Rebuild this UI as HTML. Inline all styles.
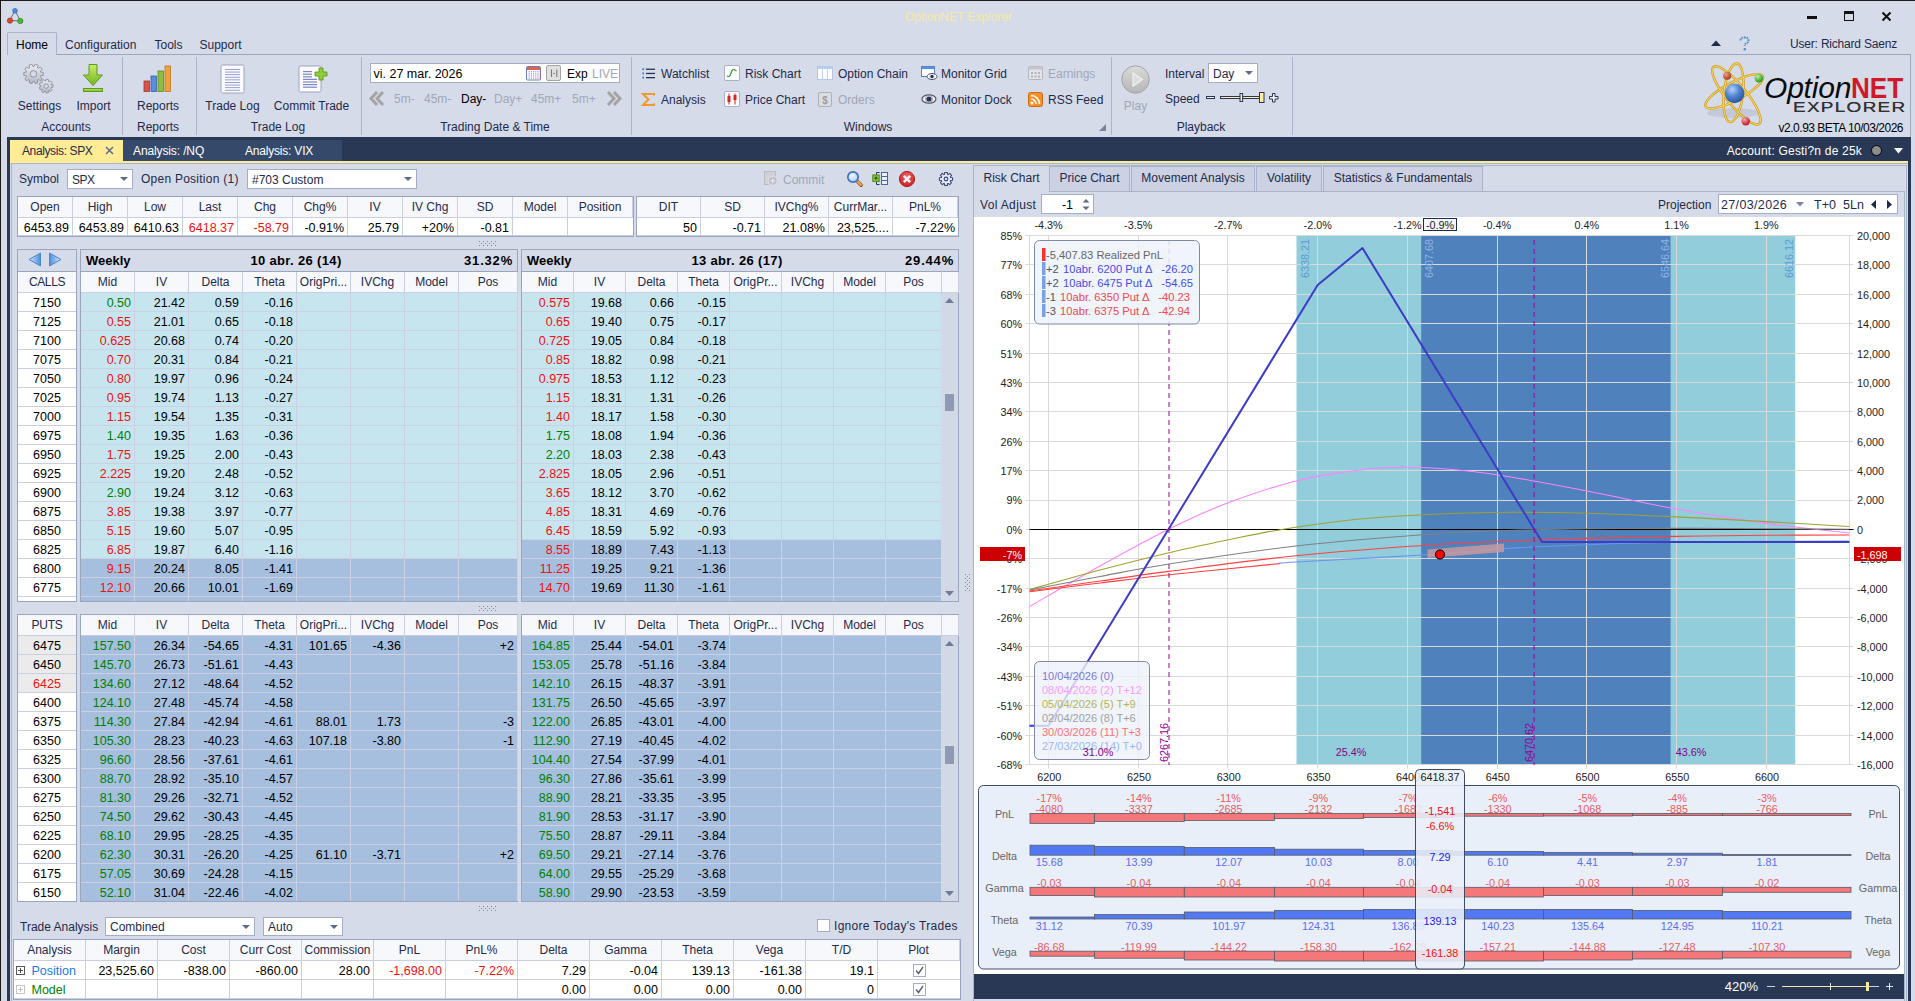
<!DOCTYPE html>
<html><head><meta charset="utf-8"><title>OptionNET Explorer</title><style>
html,body{margin:0;padding:0}
body{width:1915px;height:1001px;overflow:hidden;position:relative;background:#d6dbe9;font-family:"Liberation Sans",sans-serif;font-size:12px;color:#1e2a4a}
div{position:absolute;box-sizing:border-box;white-space:nowrap}
svg{position:absolute;overflow:visible}
.t{height:16px;line-height:16px;font-size:12px;color:#1e2a4a}
.c{text-align:center}
.r{text-align:right}
.n{font-size:12.5px;color:#000}
.g{color:#8f97ab}
.hd{background:#f7f8fc;color:#1e2a4a;text-align:center;border-right:1px solid #c9cfe0;border-bottom:1px solid #c9cfe0;line-height:21px;font-size:12px;overflow:hidden}
.cell{border-right:1px solid #c9cfe0;border-bottom:1px solid #c9cfe0;line-height:20px;font-size:12.5px;color:#000;text-align:right;padding-right:3px;overflow:hidden}
.combo{background:#fff;border:1px solid #a3adc4;line-height:20px;font-size:12px;color:#1e2a4a;padding-left:4px}
.combo:after{content:"";position:absolute;right:4px;top:7px;border:4px solid transparent;border-top:4px solid #5d6b88;border-bottom:none}
.cc{text-align:center;padding:0}
.red{color:#f01010}.grn{color:#008000}
</style></head><body>
<div style="left:0px;top:0px;width:1915px;height:1px;background:#1a1a1a"></div>
<div style="left:0px;top:0px;width:1px;height:1001px;background:#1a1a1a"></div>
<div class="t c" style="left:808.5px;width:300px;top:9px;color:#f7e9a6;font-size:12px">OptionNET Explorer</div>
<svg style="left:6px;top:7px" width="18" height="18" viewBox="0 0 18 18">
<path d="M9 3.5 L4 13 M9 3.5 L14.5 14 M4 13.5 L14 14" stroke="#6a6f7a" stroke-width="1" fill="none"/>
<circle cx="9" cy="3.8" r="2.4" fill="#4a8ae0" stroke="#2a5aa8" stroke-width=".6"/>
<circle cx="4" cy="13.6" r="2.7" fill="#e0452a" stroke="#9a2a18" stroke-width=".6"/>
<circle cx="14.3" cy="14" r="2.7" fill="#48b838" stroke="#2a7a20" stroke-width=".6"/></svg>
<div style="left:1807px;top:16px;width:10px;height:3px;background:#111"></div>
<div style="left:1844px;top:11px;width:10px;height:10px;border:1.5px solid #111;border-top:3px solid #111"></div>
<svg style="left:1881px;top:11px" width="11" height="11" viewBox="0 0 11 11"><path d="M1.5 1.5 L9.5 9.5 M9.5 1.5 L1.5 9.5" stroke="#111" stroke-width="2"/></svg>
<div style="left:7px;top:54px;width:1904px;height:82px;border-top:1px solid #9ca7bc;"></div>
<div style="left:7px;top:32px;width:50px;height:23px;background:#d6dbe9;border:1px solid #a9b3c9;border-bottom:none;border-radius:2px 2px 0 0"></div>
<div style="left:8px;top:54px;width:48px;height:1px;background:#d6dbe9"></div>
<div class="t" style="left:16px;top:36.7px;color:#000">Home</div>
<div class="t" style="left:65px;top:36.7px;">Configuration</div>
<div class="t" style="left:154.5px;top:36.7px;">Tools</div>
<div class="t" style="left:199.5px;top:36.7px;">Support</div>
<svg style="left:1711px;top:40px" width="10" height="6"><path d="M0 6 L5 0.5 L10 6Z" fill="#1e2a4a"/></svg>
<svg style="left:1738px;top:36px" width="13" height="16" viewBox="0 0 13 16"><path d="M2.5 4.5 Q2.5 1.5 6.5 1.5 Q10.5 1.5 10.5 4.5 Q10.5 6.5 8 7.5 Q6.8 8.2 6.8 10" stroke="#4a8fd8" stroke-width="2" fill="none" stroke-dasharray="1.6 .9"/><circle cx="6.8" cy="13.3" r="1.3" fill="#4a8fd8"/></svg>
<div class="t r" style="left:1597px;width:300px;top:35.8px;letter-spacing:-.2px">User: Richard Saenz</div>
<div style="left:1910px;top:55px;width:1px;height:82px;background:#9ca7bc"></div>
<div style="left:122px;top:57px;width:1px;height:78px;background:#a9b3c9"></div>
<div style="left:196px;top:57px;width:1px;height:78px;background:#a9b3c9"></div>
<div style="left:361px;top:57px;width:1px;height:78px;background:#a9b3c9"></div>
<div style="left:631px;top:57px;width:1px;height:78px;background:#a9b3c9"></div>
<div style="left:1111px;top:57px;width:1px;height:78px;background:#a9b3c9"></div>
<div style="left:1292px;top:57px;width:1px;height:78px;background:#a9b3c9"></div>
<div class="t c" style="left:-84px;width:300px;top:118.5px;">Accounts</div>
<div class="t c" style="left:8px;width:300px;top:118.5px;">Reports</div>
<div class="t c" style="left:128px;width:300px;top:118.5px;">Trade Log</div>
<div class="t c" style="left:345px;width:300px;top:118.5px;">Trading Date &amp; Time</div>
<div class="t c" style="left:718px;width:300px;top:118.5px;">Windows</div>
<div class="t c" style="left:1051px;width:300px;top:118.5px;">Playback</div>
<div class="t c" style="left:-110.5px;width:300px;top:97.5px;">Settings</div>
<div class="t c" style="left:-56.5px;width:300px;top:97.5px;">Import</div>
<div class="t c" style="left:8px;width:300px;top:97.5px;">Reports</div>
<div class="t c" style="left:82.5px;width:300px;top:97.5px;">Trade Log</div>
<div class="t c" style="left:161.5px;width:300px;top:97.5px;">Commit Trade</div>
<svg style="left:22px;top:62px" width="34" height="34"><defs><linearGradient id="ggear" x1="0" y1="0" x2="0" y2="1"><stop offset="0" stop-color="#eceef2"/><stop offset="1" stop-color="#b4b8c2"/></linearGradient></defs>
<path d="M18.68 10.10 L21.19 10.43 L21.19 13.37 L18.68 13.70 L18.36 14.67 L20.20 16.40 L18.47 18.79 L16.25 17.57 L15.43 18.17 L15.89 20.66 L13.09 21.57 L12.01 19.28 L10.99 19.28 L9.91 21.57 L7.11 20.66 L7.57 18.17 L6.75 17.57 L4.53 18.79 L2.80 16.40 L4.64 14.67 L4.32 13.70 L1.81 13.37 L1.81 10.43 L4.32 10.10 L4.64 9.13 L2.80 7.40 L4.53 5.01 L6.75 6.23 L7.57 5.63 L7.11 3.14 L9.91 2.23 L10.99 4.52 L12.01 4.52 L13.09 2.23 L15.89 3.14 L15.43 5.63 L16.25 6.23 L18.47 5.01 L20.20 7.40 L18.36 9.13Z" fill="url(#ggear)" stroke="#8a8e9a" stroke-width=".9" stroke-linejoin="round"/><circle cx="11.5" cy="11.9" r="3.3" fill="#d6dbe9" stroke="#8a8e9a" stroke-width=".9"/>
<path d="M29.01 22.73 L31.00 22.93 L31.00 25.27 L29.01 25.47 L28.74 26.21 L30.14 27.64 L28.64 29.43 L26.98 28.31 L26.30 28.70 L26.45 30.69 L24.15 31.10 L23.60 29.18 L22.83 29.04 L21.66 30.66 L19.64 29.49 L20.46 27.67 L19.95 27.07 L18.01 27.56 L17.21 25.36 L19.02 24.49 L19.02 23.71 L17.21 22.84 L18.01 20.64 L19.95 21.13 L20.46 20.53 L19.64 18.71 L21.66 17.54 L22.83 19.16 L23.60 19.02 L24.15 17.10 L26.45 17.51 L26.30 19.50 L26.98 19.89 L28.64 18.77 L30.14 20.56 L28.74 21.99Z" fill="url(#ggear)" stroke="#8a8e9a" stroke-width=".9" stroke-linejoin="round"/><circle cx="24.1" cy="24.1" r="2.3" fill="#d6dbe9" stroke="#8a8e9a" stroke-width=".9"/></svg>
<svg style="left:81px;top:63px" width="24" height="30" viewBox="0 0 24 30">
<defs><linearGradient id="gimp" x1="0" y1="0" x2="0" y2="1"><stop offset="0" stop-color="#c6ee6a"/><stop offset="1" stop-color="#6fb51c"/></linearGradient></defs>
<path d="M8 1.5 h8 v10.5 h5.5 L12 22.5 L2.5 12 h5.5z" fill="url(#gimp)" stroke="#5e9a1a" stroke-width="1"/>
<rect x="2.5" y="25.5" width="19" height="3" fill="url(#gimp)" stroke="#5e9a1a" stroke-width="1"/></svg>
<svg style="left:143px;top:64px" width="29" height="29" viewBox="0 0 29 29">
<rect x="1" y="17" width="5.5" height="10.5" fill="#d9534a" stroke="#a83228" stroke-width=".8"/>
<rect x="8" y="12" width="5.5" height="15.5" fill="#5b8ed6" stroke="#3864a8" stroke-width=".8"/>
<rect x="15" y="7" width="5.5" height="20.5" fill="#8bbd3e" stroke="#5f8c22" stroke-width=".8"/>
<rect x="22" y="2" width="5.5" height="25.5" fill="#f0a13c" stroke="#c0741a" stroke-width=".8"/></svg>
<svg style="left:220px;top:64px" width="25" height="30" viewBox="0 0 25 30"><rect x="1" y="1" width="23" height="28" rx="1.5" fill="#fbfbfd" stroke="#9aa3c2" stroke-width="1"/><rect x="5" y="5.0" width="15" height=".9" fill="#8a96cc"/><rect x="5" y="7.6" width="15" height=".9" fill="#8a96cc"/><rect x="5" y="10.2" width="15" height=".9" fill="#8a96cc"/><rect x="5" y="12.8" width="15" height=".9" fill="#8a96cc"/><rect x="5" y="15.4" width="15" height=".9" fill="#8a96cc"/><rect x="5" y="18.0" width="15" height=".9" fill="#8a96cc"/><rect x="5" y="20.6" width="15" height=".9" fill="#8a96cc"/><rect x="5" y="23.2" width="15" height=".9" fill="#8a96cc"/><rect x="5" y="25.8" width="15" height=".9" fill="#8a96cc"/></svg>
<svg style="left:298px;top:64px" width="31" height="30" viewBox="0 0 31 30"><rect x="1" y="2" width="22" height="26" rx="1.5" fill="#fbfbfd" stroke="#9aa3c2" stroke-width="1"/><rect x="5" y="7.0" width="9" height="1.2" fill="#7a86c8"/><rect x="5" y="9.6" width="9" height="1.2" fill="#7a86c8"/><rect x="5" y="12.2" width="9" height="1.2" fill="#7a86c8"/><rect x="5" y="14.8" width="14" height="1.2" fill="#7a86c8"/><rect x="5" y="17.4" width="14" height="1.2" fill="#7a86c8"/><rect x="5" y="20.0" width="14" height="1.2" fill="#7a86c8"/><rect x="5" y="22.6" width="14" height="1.2" fill="#7a86c8"/>
<path d="M19 7 h4 v-4 h4 v4 h4 v4 h-4 v4 h-4 v-4 h-4z" transform="translate(-2,1)" fill="#8fcb3a" stroke="#5f9a1c" stroke-width=".9"/></svg>
<div style="left:370px;top:63px;width:250px;height:20px;background:#fff;border:1px solid #a3adc4"></div>
<div class="t" style="left:373.5px;top:65.7px;color:#000;font-size:12.5px">vi. 27 mar. 2026</div>
<svg style="left:526px;top:66px" width="16" height="15" viewBox="0 0 16 15"><rect x=".5" y=".5" width="14" height="13.5" rx="1" fill="#fff" stroke="#6a7cc0"/><rect x="1" y="1" width="13" height="3" fill="#e2604e"/><rect x="2.6" y="5.2" width="1.1" height="1.1" fill="#7a8ad0"/><rect x="4.8" y="5.2" width="1.1" height="1.1" fill="#7a8ad0"/><rect x="7.0" y="5.2" width="1.1" height="1.1" fill="#7a8ad0"/><rect x="9.2" y="5.2" width="1.1" height="1.1" fill="#7a8ad0"/><rect x="11.4" y="5.2" width="1.1" height="1.1" fill="#7a8ad0"/><rect x="13.6" y="5.2" width="1.1" height="1.1" fill="#e05a4a"/><rect x="2.6" y="7.3" width="1.1" height="1.1" fill="#7a8ad0"/><rect x="4.8" y="7.3" width="1.1" height="1.1" fill="#7a8ad0"/><rect x="7.0" y="7.3" width="1.1" height="1.1" fill="#7a8ad0"/><rect x="9.2" y="7.3" width="1.1" height="1.1" fill="#7a8ad0"/><rect x="11.4" y="7.3" width="1.1" height="1.1" fill="#7a8ad0"/><rect x="13.6" y="7.3" width="1.1" height="1.1" fill="#e05a4a"/><rect x="2.6" y="9.4" width="1.1" height="1.1" fill="#7a8ad0"/><rect x="4.8" y="9.4" width="1.1" height="1.1" fill="#7a8ad0"/><rect x="7.0" y="9.4" width="1.1" height="1.1" fill="#7a8ad0"/><rect x="9.2" y="9.4" width="1.1" height="1.1" fill="#7a8ad0"/><rect x="11.4" y="9.4" width="1.1" height="1.1" fill="#7a8ad0"/><rect x="13.6" y="9.4" width="1.1" height="1.1" fill="#e05a4a"/><rect x="2.6" y="11.5" width="1.1" height="1.1" fill="#7a8ad0"/><rect x="4.8" y="11.5" width="1.1" height="1.1" fill="#7a8ad0"/><rect x="7.0" y="11.5" width="1.1" height="1.1" fill="#7a8ad0"/><rect x="9.2" y="11.5" width="1.1" height="1.1" fill="#e05a4a"/><rect x="11.4" y="11.5" width="1.1" height="1.1" fill="#e05a4a"/><rect x="13.6" y="11.5" width="1.1" height="1.1" fill="#e05a4a"/></svg>
<div style="left:546px;top:65px;width:15px;height:16px;background:#e0e0e0;border:1px solid #a4a4a4;border-radius:2px"></div>
<svg style="left:546px;top:65px" width="15" height="16"><path d="M5.5 4.5 v7.5 M10.8 4.5 v7.5 M7.4 8.5 h1.6" stroke="#7a7a7a" stroke-width="1.1" fill="none"/></svg>
<div class="t" style="left:567px;top:65.7px;color:#000">Exp</div>
<div class="t" style="left:592px;top:65.7px;color:#a0a7b8">LIVE</div>
<div class="t" style="left:394px;top:90.5px;color:#a0a7b8">5m-</div>
<div class="t" style="left:424px;top:90.5px;color:#a0a7b8">45m-</div>
<div class="t" style="left:461px;top:90.5px;color:#000">Day-</div>
<div class="t" style="left:494px;top:90.5px;color:#a0a7b8">Day+</div>
<div class="t" style="left:531px;top:90.5px;color:#a0a7b8">45m+</div>
<div class="t" style="left:572px;top:90.5px;color:#a0a7b8">5m+</div>
<svg style="left:369px;top:91px" width="16" height="15"><path d="M8 1 L2 7.5 L8 14 M14 1 L8 7.5 L14 14" stroke="#a4a4a4" stroke-width="3" fill="none"/></svg>
<svg style="left:606px;top:91px" width="16" height="15"><path d="M2 1 L8 7.5 L2 14 M8 1 L14 7.5 L8 14" stroke="#a4a4a4" stroke-width="3" fill="none"/></svg>
<div class="t" style="left:661px;top:65.5px;">Watchlist</div>
<div class="t" style="left:661px;top:91.5px;">Analysis</div>
<div class="t" style="left:745px;top:65.5px;">Risk Chart</div>
<div class="t" style="left:745px;top:91.5px;">Price Chart</div>
<div class="t" style="left:838px;top:65.5px;">Option Chain</div>
<div class="t" style="left:838px;top:91.5px;color:#a0a7b8">Orders</div>
<div class="t" style="left:941px;top:65.5px;">Monitor Grid</div>
<div class="t" style="left:941px;top:91.5px;">Monitor Dock</div>
<div class="t" style="left:1048px;top:65.5px;color:#a0a7b8">Earnings</div>
<div class="t" style="left:1048px;top:91.5px;">RSS Feed</div>
<svg style="left:641px;top:66px" width="15" height="15"><g fill="#2a3350"><rect x="5" y="2.6" width="9" height="1.3"/><rect x="5" y="6.8" width="9" height="1.3"/><rect x="5" y="11" width="9" height="1.3"/></g><g fill="#4a86d8"><rect x="1.3" y="2.2" width="1.8" height="2"/><rect x="1.3" y="6.4" width="1.8" height="2"/><rect x="1.3" y="10.6" width="1.8" height="2"/></g></svg>
<svg style="left:641px;top:92px" width="15" height="15"><path d="M13 3.5 V2 H2 L7.5 7.5 L2 13 H13 V11.5" stroke="#f09a28" stroke-width="2" fill="none"/></svg>
<svg style="left:724px;top:65px" width="16" height="16"><rect x=".5" y=".5" width="15" height="15" rx="1.5" fill="#fbfbfd" stroke="#a9b1c8"/><path d="M3 11 Q5.5 13 7 8 Q8.5 3 11 5 L12.5 6" stroke="#4a9a3a" stroke-width="1.3" fill="none"/></svg>
<svg style="left:724px;top:91px" width="16" height="16"><rect x=".5" y=".5" width="15" height="15" rx="1.5" fill="#fbfbfd" stroke="#a9b1c8"/><path d="M5 2.5 v11 M11 2.5 v11" stroke="#c02020" stroke-width="1"/><rect x="3.5" y="5" width="3" height="6" fill="#d02828"/><rect x="9.5" y="4" width="3" height="5" fill="#d02828"/></svg>
<svg style="left:817px;top:66px" width="16" height="14"><rect x=".5" y=".5" width="15" height="13" fill="#fdfdff" stroke="#b4c6e6"/><rect x=".5" y=".5" width="15" height="2.6" fill="#b6cdf0"/><path d="M5.5 3.5 v10 M10.5 3.5 v10" stroke="#c0d0ea"/></svg>
<svg style="left:818px;top:92px" width="14" height="15"><rect x=".5" y=".5" width="13" height="14" rx="1.5" fill="#dcdde2" stroke="#aeb0b8"/><text x="7" y="11.5" font-size="10" text-anchor="middle" fill="#9a9ca6" font-family="Liberation Sans" font-weight="bold">$</text></svg>
<svg style="left:921px;top:66px" width="17" height="15"><rect x=".5" y=".5" width="13" height="10" fill="#fff" stroke="#5b7fc0"/><rect x=".5" y=".5" width="13" height="2.6" fill="#5b8fdc"/><ellipse cx="11" cy="10.5" rx="5" ry="3" fill="#f2f2f6" stroke="#50566a"/><circle cx="11" cy="10.5" r="1.7" fill="#2a3350"/></svg>
<svg style="left:921px;top:93px" width="17" height="12"><ellipse cx="8" cy="6" rx="7" ry="4.2" fill="#f2f2f6" stroke="#50566a" stroke-width="1.2"/><circle cx="8" cy="6" r="2.6" fill="#2a3350"/><circle cx="8" cy="6" r="3.6" fill="none" stroke="#8a90a8" stroke-width=".8"/></svg>
<svg style="left:1028px;top:66px" width="15" height="14"><rect x=".5" y=".5" width="14" height="13" rx="1" fill="#e4e5ea" stroke="#b4b6be"/><rect x=".5" y=".5" width="14" height="3" fill="#c4c6ce"/><g fill="#b4b6be"><rect x="3" y="6" width="2" height="2"/><rect x="6.5" y="6" width="2" height="2"/><rect x="10" y="6" width="2" height="2"/><rect x="3" y="9.5" width="2" height="2"/><rect x="6.5" y="9.5" width="2" height="2"/><rect x="10" y="9.5" width="2" height="2"/></g></svg>
<svg style="left:1028px;top:92px" width="15" height="15"><rect x=".5" y=".5" width="14" height="14" rx="2" fill="#f5902a" stroke="#d06a10"/><circle cx="4" cy="11" r="1.5" fill="#fff"/><path d="M3 7 A5 5 0 0 1 8 12 M3 3.5 A8.5 8.5 0 0 1 11.5 12" stroke="#fff" stroke-width="1.6" fill="none"/></svg>
<svg style="left:1099px;top:124px" width="7" height="7"><path d="M7 0 V7 H0Z" fill="#7a849e"/></svg>
<svg style="left:1121px;top:65px" width="29" height="29"><defs><linearGradient id="gpl" x1="0" y1="0" x2="0" y2="1"><stop offset="0" stop-color="#dadada"/><stop offset="1" stop-color="#b6b6b6"/></linearGradient></defs><circle cx="14.5" cy="14.5" r="13.7" fill="url(#gpl)" stroke="#a4a4a4"/><path d="M12 8 L21.5 14.5 L12 21Z" fill="#dedede" stroke="#f0f0f0" stroke-width="1.2"/></svg>
<div class="t c" style="left:985.5px;width:300px;top:97.5px;color:#a0a7b8">Play</div>
<div class="t" style="left:1165px;top:65.5px;">Interval</div>
<div class="t" style="left:1165px;top:90.5px;">Speed</div>
<div class="combo" style="left:1208px;top:63px;width:50px;height:20px;">Day</div>
<svg style="left:1204px;top:90px" width="76" height="15"><g fill="#fbf0a6" stroke="#2a3358" stroke-width="1">
<rect x="2.5" y="6.5" width="8" height="2" fill="#f4f4f8"/>
<rect x="16.5" y="6.5" width="40" height="2"/>
<rect x="36" y="3.5" width="2.6" height="8"/>
<rect x="55.5" y="2.5" width="4.5" height="10"/>
<path d="M68.5 3.5 h2.5 v3 h3 v2.5 h-3 v3 h-2.5 v-3 h-3 v-2.5 h3z" fill="#f4f4f8"/></g></svg>
<svg style="left:1703.5px;top:61px" width="70" height="72" viewBox="0 0 70 72">
<defs><radialGradient id="gb" cx=".38" cy=".3" r=".75"><stop offset="0" stop-color="#b4d2f8"/><stop offset=".5" stop-color="#4f82d0"/><stop offset="1" stop-color="#2a4f98"/></radialGradient>
<radialGradient id="gr" cx=".35" cy=".3" r=".7"><stop offset="0" stop-color="#f8a8a8"/><stop offset="1" stop-color="#c01820"/></radialGradient>
<radialGradient id="gg" cx=".35" cy=".3" r=".7"><stop offset="0" stop-color="#b8f0a0"/><stop offset="1" stop-color="#2a9a1c"/></radialGradient>
<radialGradient id="go" cx=".35" cy=".3" r=".7"><stop offset="0" stop-color="#f0a888"/><stop offset="1" stop-color="#a83810"/></radialGradient></defs>
<ellipse cx="29" cy="52" rx="26" ry="5" fill="#9aa0b8" opacity=".3"/>
<g fill="none" stroke="#cf9a14" stroke-width="2.4"><ellipse cx="29.5" cy="31.8" rx="29.5" ry="9.5" transform="rotate(96.7 29.5 31.8)"/><ellipse cx="32.4" cy="34.4" rx="36.5" ry="10" transform="rotate(51 32.4 34.4)"/><ellipse cx="30.2" cy="30.3" rx="32.4" ry="9" transform="rotate(-28 30.2 30.3)"/></g>
<g fill="none" stroke="#f4d866" stroke-width="1"><ellipse cx="29.5" cy="31.8" rx="29.5" ry="9.5" transform="rotate(96.7 29.5 31.8)"/><ellipse cx="32.4" cy="34.4" rx="36.5" ry="10" transform="rotate(51 32.4 34.4)"/><ellipse cx="30.2" cy="30.3" rx="32.4" ry="9" transform="rotate(-28 30.2 30.3)"/></g>
<circle cx="30.6" cy="32.4" r="9.8" fill="url(#gb)"/>
<circle cx="23.1" cy="14.8" r="4" fill="url(#go)"/>
<circle cx="54.9" cy="17.1" r="4.3" fill="url(#gg)"/>
<circle cx="41.7" cy="60.2" r="4.2" fill="url(#gr)"/></svg>
<div style="left:1764px;top:70.7px;width:100px;height:34px;font-size:30px;line-height:34px;font-style:italic;color:#0a0a0a;letter-spacing:-.2px">Option</div>
<div style="left:1851.3px;top:70.7px;width:70px;height:34px;font-size:30px;line-height:34px;font-weight:bold;color:#d01828;transform:scaleX(.87);transform-origin:0 0">NET</div>
<div style="left:1792.5px;top:99px;width:90px;height:17px;font-size:14.5px;line-height:17px;color:#333;letter-spacing:1px;text-shadow:0 0 .5px #333;transform:scaleX(1.305);transform-origin:0 0">EXPLORER</div>
<div class="t r" style="left:1603px;width:300px;top:119.5px;color:#000;letter-spacing:-.5px">v2.0.93 BETA 10/03/2026</div>
<div style="left:7px;top:137px;width:1904px;height:26px;background:#293955"></div>
<div style="left:7px;top:163px;width:3px;height:838px;background:#293955"></div>
<div style="left:1908px;top:163px;width:3px;height:838px;background:#293955"></div>
<div style="left:10px;top:161px;width:1898px;height:2px;background:#ffec94"></div>
<div style="left:10px;top:140px;width:113px;height:23px;background:#ffec94"></div>
<div style="left:123px;top:140px;width:219px;height:21px;background:#35496a"></div>
<div class="t" style="left:22px;top:142.5px;color:#1e2a4a;letter-spacing:-.38px">Analysis: SPX</div>
<svg style="left:105px;top:146px" width="9" height="9"><path d="M1 1 L8 8 M8 1 L1 8" stroke="#5d6b88" stroke-width="1.5"/></svg>
<div class="t" style="left:133px;top:142.5px;color:#fff;letter-spacing:-.12px">Analysis: /NQ</div>
<div class="t" style="left:245px;top:142.5px;color:#fff;letter-spacing:-.2px">Analysis: VIX</div>
<div class="t r" style="left:1562px;width:300px;top:143px;color:#fff;letter-spacing:.2px">Account: Gesti?n de 25k</div>
<div style="left:1871px;top:145px;width:11px;height:11px;background:#8c8c8c;border:1px solid #000;border-radius:6px"></div>
<svg style="left:1894px;top:148px" width="9" height="6"><path d="M0 0 H9 L4.5 5.5Z" fill="#fff"/></svg>
<div style="left:11px;top:163px;width:1897px;height:838px;border:1px solid #a9b3c9;border-bottom:none;border-right:none"></div>
<div class="t" style="left:19px;top:171px;">Symbol</div>
<div class="combo" style="left:67px;top:169px;width:66px;height:20px;letter-spacing:-.5px">SPX</div>
<div class="t" style="left:141px;top:171px;letter-spacing:.25px">Open Position (1)</div>
<div class="combo" style="left:247px;top:169px;width:170px;height:20px;">#703 Custom</div>
<div class="t" style="left:783px;top:172px;color:#a0a7b8">Commit</div>
<svg style="left:763px;top:170px" width="18" height="18"><rect x="1.5" y="1.5" width="11" height="13" fill="#cfd1d8" stroke="#babcc4"/><circle cx="9.6" cy="10.8" r="4.6" fill="#bfc1c9" stroke="#dcdee5" stroke-width="1.2"/><path d="M7.2 10.8 h4.8 M9.6 8.4 v4.8" stroke="#e6e8ee" stroke-width="1.2"/></svg>
<svg style="left:846px;top:170px" width="18" height="18"><defs><radialGradient id="glens" cx=".4" cy=".35" r=".7"><stop offset="0" stop-color="#f0f8ff"/><stop offset="1" stop-color="#a8ccf4"/></radialGradient></defs><path d="M10.6 10.6 L15.2 15.2" stroke="#8a5220" stroke-width="3.4" stroke-linecap="round"/><path d="M10.8 10.8 L15 15" stroke="#eda850" stroke-width="2" stroke-linecap="round"/><circle cx="7" cy="7" r="5.2" fill="url(#glens)" stroke="#3f6fc0" stroke-width="1.7"/></svg>
<svg style="left:872px;top:171px" width="17" height="15"><rect x="9.5" y="1.5" width="6" height="12" fill="#e8f0fc" stroke="#4a64a8"/><path d="M9.5 5.5 h6 M9.5 9.5 h6" stroke="#4a64a8"/><path d="M7.5 1.5 h-3 v12 h3" fill="none" stroke="#2a3660"/><rect x=".8" y="4" width="6.4" height="6.4" fill="#8cc63f" stroke="#4c8a18"/><path d="M2.4 7.2 h3.2 M4 5.6 v3.2" stroke="#2a5a10" stroke-width="1.2"/></svg>
<svg style="left:898px;top:170px" width="18" height="18"><defs><radialGradient id="gx" cx=".5" cy=".3" r=".8"><stop offset="0" stop-color="#f06060"/><stop offset="1" stop-color="#c81818"/></radialGradient></defs><circle cx="9" cy="9" r="7.6" fill="url(#gx)" stroke="#a82020" stroke-width="1"/><path d="M5.8 5.8 L12.2 12.2 M12.2 5.8 L5.8 12.2" stroke="#f4f4f8" stroke-width="2.6"/></svg>
<svg style="left:938px;top:171px" width="16" height="16"><path d="M12.66 6.47 L14.57 6.70 L14.57 9.30 L12.66 9.53 L12.37 10.21 L13.56 11.73 L11.73 13.56 L10.21 12.37 L9.53 12.66 L9.30 14.57 L6.70 14.57 L6.47 12.66 L5.79 12.37 L4.27 13.56 L2.44 11.73 L3.63 10.21 L3.34 9.53 L1.43 9.30 L1.43 6.70 L3.34 6.47 L3.63 5.79 L2.44 4.27 L4.27 2.44 L5.79 3.63 L6.47 3.34 L6.70 1.43 L9.30 1.43 L9.53 3.34 L10.21 3.63 L11.73 2.44 L13.56 4.27 L12.37 5.79Z" fill="#e6eaf4" stroke="#3a4874" stroke-width="1.1" stroke-linejoin="round"/><circle cx="8.0" cy="8.0" r="1.9" fill="#d6dbe9" stroke="#3a4874" stroke-width="1.1"/></svg>
<div style="left:17px;top:196px;width:617px;height:41px;border:1px solid #9aa6bd;background:#fff"></div>
<div class="hd" style="left:18px;top:197px;width:55px;height:21px;line-height:21px;">Open</div>
<div class="hd" style="left:73px;top:197px;width:55px;height:21px;line-height:21px;">High</div>
<div class="hd" style="left:128px;top:197px;width:55px;height:21px;line-height:21px;">Low</div>
<div class="hd" style="left:183px;top:197px;width:55px;height:21px;line-height:21px;">Last</div>
<div class="hd" style="left:238px;top:197px;width:55px;height:21px;line-height:21px;">Chg</div>
<div class="hd" style="left:293px;top:197px;width:55px;height:21px;line-height:21px;">Chg%</div>
<div class="hd" style="left:348px;top:197px;width:55px;height:21px;line-height:21px;">IV</div>
<div class="hd" style="left:403px;top:197px;width:55px;height:21px;line-height:21px;">IV Chg</div>
<div class="hd" style="left:458px;top:197px;width:55px;height:21px;line-height:21px;">SD</div>
<div class="hd" style="left:513px;top:197px;width:55px;height:21px;line-height:21px;">Model</div>
<div class="hd" style="left:568px;top:197px;width:65px;height:21px;line-height:21px;">Position</div>
<div class="cell " style="left:18px;top:218px;width:55px;height:18px;line-height:20px;">6453.89</div>
<div class="cell " style="left:73px;top:218px;width:55px;height:18px;line-height:20px;">6453.89</div>
<div class="cell " style="left:128px;top:218px;width:55px;height:18px;line-height:20px;">6410.63</div>
<div class="cell red" style="left:183px;top:218px;width:55px;height:18px;line-height:20px;">6418.37</div>
<div class="cell red" style="left:238px;top:218px;width:55px;height:18px;line-height:20px;">-58.79</div>
<div class="cell " style="left:293px;top:218px;width:55px;height:18px;line-height:20px;">-0.91%</div>
<div class="cell " style="left:348px;top:218px;width:55px;height:18px;line-height:20px;">25.79</div>
<div class="cell " style="left:403px;top:218px;width:55px;height:18px;line-height:20px;">+20%</div>
<div class="cell " style="left:458px;top:218px;width:55px;height:18px;line-height:20px;">-0.81</div>
<div class="cell " style="left:513px;top:218px;width:55px;height:18px;line-height:20px;"></div>
<div class="cell " style="left:568px;top:218px;width:65px;height:18px;border-right:none;line-height:20px;"></div>
<div style="left:636px;top:196px;width:323px;height:41px;border:1px solid #9aa6bd;background:#fff"></div>
<div class="hd" style="left:637px;top:197px;width:64px;height:21px;line-height:21px;">DIT</div>
<div class="hd" style="left:701px;top:197px;width:64px;height:21px;line-height:21px;">SD</div>
<div class="hd" style="left:765px;top:197px;width:64px;height:21px;line-height:21px;">IVChg%</div>
<div class="hd" style="left:829px;top:197px;width:64px;height:21px;line-height:21px;">CurrMar...</div>
<div class="hd" style="left:893px;top:197px;width:65px;height:21px;line-height:21px;">PnL%</div>
<div class="cell " style="left:637px;top:218px;width:64px;height:18px;line-height:20px;">50</div>
<div class="cell " style="left:701px;top:218px;width:64px;height:18px;line-height:20px;">-0.71</div>
<div class="cell " style="left:765px;top:218px;width:64px;height:18px;line-height:20px;">21.08%</div>
<div class="cell " style="left:829px;top:218px;width:64px;height:18px;line-height:20px;">23,525....</div>
<div class="cell " style="left:893px;top:218px;width:65px;height:18px;border-right:none;line-height:20px;">-7.22%</div>
<div style="left:479px;top:241px;width:17px;height:5px;background-image:radial-gradient(circle at 0.5px 0.5px,#7c88a4 0.6px,transparent 0.9px),radial-gradient(circle at 0.5px 0.5px,#7c88a4 0.6px,transparent 0.9px);background-size:4px 4px,4px 4px;background-position:0 0,2px 2px"></div>
<div style="left:479px;top:606px;width:17px;height:5px;background-image:radial-gradient(circle at 0.5px 0.5px,#7c88a4 0.6px,transparent 0.9px),radial-gradient(circle at 0.5px 0.5px,#7c88a4 0.6px,transparent 0.9px);background-size:4px 4px,4px 4px;background-position:0 0,2px 2px"></div>
<div style="left:479px;top:906px;width:17px;height:5px;background-image:radial-gradient(circle at 0.5px 0.5px,#7c88a4 0.6px,transparent 0.9px),radial-gradient(circle at 0.5px 0.5px,#7c88a4 0.6px,transparent 0.9px);background-size:4px 4px,4px 4px;background-position:0 0,2px 2px"></div>
<div style="left:965px;top:574px;width:5px;height:17px;background-image:radial-gradient(circle at 0.5px 0.5px,#7c88a4 0.6px,transparent 0.9px),radial-gradient(circle at 0.5px 0.5px,#7c88a4 0.6px,transparent 0.9px);background-size:4px 4px,4px 4px;background-position:0 0,2px 2px"></div>
<div style="left:17px;top:249px;width:60px;height:23px;border:1px solid #9aa6bd;border-bottom:none;background:#d6dbe9"></div>
<svg style="left:28px;top:252px" width="34" height="15"><defs><linearGradient id="gar" x1="0" y1="0" x2="1" y2="0"><stop offset="0" stop-color="#d4e6f8"/><stop offset="1" stop-color="#4a90d8"/></linearGradient><linearGradient id="gar2" x1="1" y1="0" x2="0" y2="0"><stop offset="0" stop-color="#d4e6f8"/><stop offset="1" stop-color="#4a90d8"/></linearGradient></defs>
<path d="M12.5 1 V14 L1 7.5Z" fill="url(#gar)" stroke="#4a86cc" stroke-width="1"/><path d="M21.5 1 V14 L33 7.5Z" fill="url(#gar2)" stroke="#4a86cc" stroke-width="1"/></svg>
<div style="left:17px;top:271px;width:60px;height:331px;border:1px solid #9aa6bd;background:#fff"></div>
<div class="hd" style="left:18px;top:272px;width:58px;height:21px;border-right:none;letter-spacing:-.4px">CALLS</div>
<div style="left:18px;top:293px;width:58px;height:308px;overflow:hidden;background:#fff">
<div class="cell" style="left:0;top:0px;width:58px;height:19px;text-align:center;padding:0;border-right:none;">7150</div>
<div class="cell" style="left:0;top:19px;width:58px;height:19px;text-align:center;padding:0;border-right:none;">7125</div>
<div class="cell" style="left:0;top:38px;width:58px;height:19px;text-align:center;padding:0;border-right:none;">7100</div>
<div class="cell" style="left:0;top:57px;width:58px;height:19px;text-align:center;padding:0;border-right:none;">7075</div>
<div class="cell" style="left:0;top:76px;width:58px;height:19px;text-align:center;padding:0;border-right:none;">7050</div>
<div class="cell" style="left:0;top:95px;width:58px;height:19px;text-align:center;padding:0;border-right:none;">7025</div>
<div class="cell" style="left:0;top:114px;width:58px;height:19px;text-align:center;padding:0;border-right:none;">7000</div>
<div class="cell" style="left:0;top:133px;width:58px;height:19px;text-align:center;padding:0;border-right:none;">6975</div>
<div class="cell" style="left:0;top:152px;width:58px;height:19px;text-align:center;padding:0;border-right:none;">6950</div>
<div class="cell" style="left:0;top:171px;width:58px;height:19px;text-align:center;padding:0;border-right:none;">6925</div>
<div class="cell" style="left:0;top:190px;width:58px;height:19px;text-align:center;padding:0;border-right:none;">6900</div>
<div class="cell" style="left:0;top:209px;width:58px;height:19px;text-align:center;padding:0;border-right:none;">6875</div>
<div class="cell" style="left:0;top:228px;width:58px;height:19px;text-align:center;padding:0;border-right:none;">6850</div>
<div class="cell" style="left:0;top:247px;width:58px;height:19px;text-align:center;padding:0;border-right:none;">6825</div>
<div class="cell" style="left:0;top:266px;width:58px;height:19px;text-align:center;padding:0;border-right:none;">6800</div>
<div class="cell" style="left:0;top:285px;width:58px;height:19px;text-align:center;padding:0;border-right:none;">6775</div>
<div class="cell" style="left:0;top:304px;width:58px;height:19px;text-align:center;padding:0;border-right:none;"></div>
</div>
<div style="left:80px;top:249px;width:438px;height:353px;border:1px solid #9aa6bd;background:#d6dbe9"></div>
<div class="t" style="left:86px;top:252.8px;font-weight:bold;color:#000;font-size:13px">Weekly</div>
<div class="t c" style="left:146px;width:300px;top:252.8px;font-weight:bold;color:#000;font-size:13px;letter-spacing:.35px">10 abr. 26 (14)</div>
<div class="t r" style="left:213px;width:300px;top:252.8px;font-weight:bold;color:#000;font-size:13px;letter-spacing:.8px">31.32%</div>
<div style="left:81px;top:271px;width:436px;height:1px;background:#9aa6bd"></div>
<div class="hd" style="left:81px;top:272px;width:54px;height:21px;">Mid</div>
<div class="hd" style="left:135px;top:272px;width:54px;height:21px;">IV</div>
<div class="hd" style="left:189px;top:272px;width:54px;height:21px;">Delta</div>
<div class="hd" style="left:243px;top:272px;width:54px;height:21px;">Theta</div>
<div class="hd" style="left:297px;top:272px;width:54px;height:21px;">OrigPri...</div>
<div class="hd" style="left:351px;top:272px;width:54px;height:21px;">IVChg</div>
<div class="hd" style="left:405px;top:272px;width:54px;height:21px;">Model</div>
<div class="hd" style="left:459px;top:272px;width:59px;height:21px;">Pos</div>
<div style="left:81px;top:293px;width:437px;height:308px;overflow:hidden">
<div class="cell grn" style="left:0px;top:0px;width:54px;height:19px;background:#c7e5ee;border-color:#cdd0e2">0.50</div>
<div class="cell " style="left:54px;top:0px;width:54px;height:19px;background:#c7e5ee;border-color:#cdd0e2">21.42</div>
<div class="cell " style="left:108px;top:0px;width:54px;height:19px;background:#c7e5ee;border-color:#cdd0e2">0.59</div>
<div class="cell " style="left:162px;top:0px;width:54px;height:19px;background:#c7e5ee;border-color:#cdd0e2">-0.16</div>
<div class="cell " style="left:216px;top:0px;width:54px;height:19px;background:#c7e5ee;border-color:#cdd0e2"></div>
<div class="cell " style="left:270px;top:0px;width:54px;height:19px;background:#c7e5ee;border-color:#cdd0e2"></div>
<div class="cell " style="left:324px;top:0px;width:54px;height:19px;background:#c7e5ee;border-color:#cdd0e2"></div>
<div class="cell " style="left:378px;top:0px;width:59px;height:19px;background:#c7e5ee;border-color:#cdd0e2"></div>
<div class="cell red" style="left:0px;top:19px;width:54px;height:19px;background:#c7e5ee;border-color:#cdd0e2">0.55</div>
<div class="cell " style="left:54px;top:19px;width:54px;height:19px;background:#c7e5ee;border-color:#cdd0e2">21.01</div>
<div class="cell " style="left:108px;top:19px;width:54px;height:19px;background:#c7e5ee;border-color:#cdd0e2">0.65</div>
<div class="cell " style="left:162px;top:19px;width:54px;height:19px;background:#c7e5ee;border-color:#cdd0e2">-0.18</div>
<div class="cell " style="left:216px;top:19px;width:54px;height:19px;background:#c7e5ee;border-color:#cdd0e2"></div>
<div class="cell " style="left:270px;top:19px;width:54px;height:19px;background:#c7e5ee;border-color:#cdd0e2"></div>
<div class="cell " style="left:324px;top:19px;width:54px;height:19px;background:#c7e5ee;border-color:#cdd0e2"></div>
<div class="cell " style="left:378px;top:19px;width:59px;height:19px;background:#c7e5ee;border-color:#cdd0e2"></div>
<div class="cell red" style="left:0px;top:38px;width:54px;height:19px;background:#c7e5ee;border-color:#cdd0e2">0.625</div>
<div class="cell " style="left:54px;top:38px;width:54px;height:19px;background:#c7e5ee;border-color:#cdd0e2">20.68</div>
<div class="cell " style="left:108px;top:38px;width:54px;height:19px;background:#c7e5ee;border-color:#cdd0e2">0.74</div>
<div class="cell " style="left:162px;top:38px;width:54px;height:19px;background:#c7e5ee;border-color:#cdd0e2">-0.20</div>
<div class="cell " style="left:216px;top:38px;width:54px;height:19px;background:#c7e5ee;border-color:#cdd0e2"></div>
<div class="cell " style="left:270px;top:38px;width:54px;height:19px;background:#c7e5ee;border-color:#cdd0e2"></div>
<div class="cell " style="left:324px;top:38px;width:54px;height:19px;background:#c7e5ee;border-color:#cdd0e2"></div>
<div class="cell " style="left:378px;top:38px;width:59px;height:19px;background:#c7e5ee;border-color:#cdd0e2"></div>
<div class="cell red" style="left:0px;top:57px;width:54px;height:19px;background:#c7e5ee;border-color:#cdd0e2">0.70</div>
<div class="cell " style="left:54px;top:57px;width:54px;height:19px;background:#c7e5ee;border-color:#cdd0e2">20.31</div>
<div class="cell " style="left:108px;top:57px;width:54px;height:19px;background:#c7e5ee;border-color:#cdd0e2">0.84</div>
<div class="cell " style="left:162px;top:57px;width:54px;height:19px;background:#c7e5ee;border-color:#cdd0e2">-0.21</div>
<div class="cell " style="left:216px;top:57px;width:54px;height:19px;background:#c7e5ee;border-color:#cdd0e2"></div>
<div class="cell " style="left:270px;top:57px;width:54px;height:19px;background:#c7e5ee;border-color:#cdd0e2"></div>
<div class="cell " style="left:324px;top:57px;width:54px;height:19px;background:#c7e5ee;border-color:#cdd0e2"></div>
<div class="cell " style="left:378px;top:57px;width:59px;height:19px;background:#c7e5ee;border-color:#cdd0e2"></div>
<div class="cell red" style="left:0px;top:76px;width:54px;height:19px;background:#c7e5ee;border-color:#cdd0e2">0.80</div>
<div class="cell " style="left:54px;top:76px;width:54px;height:19px;background:#c7e5ee;border-color:#cdd0e2">19.97</div>
<div class="cell " style="left:108px;top:76px;width:54px;height:19px;background:#c7e5ee;border-color:#cdd0e2">0.96</div>
<div class="cell " style="left:162px;top:76px;width:54px;height:19px;background:#c7e5ee;border-color:#cdd0e2">-0.24</div>
<div class="cell " style="left:216px;top:76px;width:54px;height:19px;background:#c7e5ee;border-color:#cdd0e2"></div>
<div class="cell " style="left:270px;top:76px;width:54px;height:19px;background:#c7e5ee;border-color:#cdd0e2"></div>
<div class="cell " style="left:324px;top:76px;width:54px;height:19px;background:#c7e5ee;border-color:#cdd0e2"></div>
<div class="cell " style="left:378px;top:76px;width:59px;height:19px;background:#c7e5ee;border-color:#cdd0e2"></div>
<div class="cell red" style="left:0px;top:95px;width:54px;height:19px;background:#c7e5ee;border-color:#cdd0e2">0.95</div>
<div class="cell " style="left:54px;top:95px;width:54px;height:19px;background:#c7e5ee;border-color:#cdd0e2">19.74</div>
<div class="cell " style="left:108px;top:95px;width:54px;height:19px;background:#c7e5ee;border-color:#cdd0e2">1.13</div>
<div class="cell " style="left:162px;top:95px;width:54px;height:19px;background:#c7e5ee;border-color:#cdd0e2">-0.27</div>
<div class="cell " style="left:216px;top:95px;width:54px;height:19px;background:#c7e5ee;border-color:#cdd0e2"></div>
<div class="cell " style="left:270px;top:95px;width:54px;height:19px;background:#c7e5ee;border-color:#cdd0e2"></div>
<div class="cell " style="left:324px;top:95px;width:54px;height:19px;background:#c7e5ee;border-color:#cdd0e2"></div>
<div class="cell " style="left:378px;top:95px;width:59px;height:19px;background:#c7e5ee;border-color:#cdd0e2"></div>
<div class="cell red" style="left:0px;top:114px;width:54px;height:19px;background:#c7e5ee;border-color:#cdd0e2">1.15</div>
<div class="cell " style="left:54px;top:114px;width:54px;height:19px;background:#c7e5ee;border-color:#cdd0e2">19.54</div>
<div class="cell " style="left:108px;top:114px;width:54px;height:19px;background:#c7e5ee;border-color:#cdd0e2">1.35</div>
<div class="cell " style="left:162px;top:114px;width:54px;height:19px;background:#c7e5ee;border-color:#cdd0e2">-0.31</div>
<div class="cell " style="left:216px;top:114px;width:54px;height:19px;background:#c7e5ee;border-color:#cdd0e2"></div>
<div class="cell " style="left:270px;top:114px;width:54px;height:19px;background:#c7e5ee;border-color:#cdd0e2"></div>
<div class="cell " style="left:324px;top:114px;width:54px;height:19px;background:#c7e5ee;border-color:#cdd0e2"></div>
<div class="cell " style="left:378px;top:114px;width:59px;height:19px;background:#c7e5ee;border-color:#cdd0e2"></div>
<div class="cell grn" style="left:0px;top:133px;width:54px;height:19px;background:#c7e5ee;border-color:#cdd0e2">1.40</div>
<div class="cell " style="left:54px;top:133px;width:54px;height:19px;background:#c7e5ee;border-color:#cdd0e2">19.35</div>
<div class="cell " style="left:108px;top:133px;width:54px;height:19px;background:#c7e5ee;border-color:#cdd0e2">1.63</div>
<div class="cell " style="left:162px;top:133px;width:54px;height:19px;background:#c7e5ee;border-color:#cdd0e2">-0.36</div>
<div class="cell " style="left:216px;top:133px;width:54px;height:19px;background:#c7e5ee;border-color:#cdd0e2"></div>
<div class="cell " style="left:270px;top:133px;width:54px;height:19px;background:#c7e5ee;border-color:#cdd0e2"></div>
<div class="cell " style="left:324px;top:133px;width:54px;height:19px;background:#c7e5ee;border-color:#cdd0e2"></div>
<div class="cell " style="left:378px;top:133px;width:59px;height:19px;background:#c7e5ee;border-color:#cdd0e2"></div>
<div class="cell red" style="left:0px;top:152px;width:54px;height:19px;background:#c7e5ee;border-color:#cdd0e2">1.75</div>
<div class="cell " style="left:54px;top:152px;width:54px;height:19px;background:#c7e5ee;border-color:#cdd0e2">19.25</div>
<div class="cell " style="left:108px;top:152px;width:54px;height:19px;background:#c7e5ee;border-color:#cdd0e2">2.00</div>
<div class="cell " style="left:162px;top:152px;width:54px;height:19px;background:#c7e5ee;border-color:#cdd0e2">-0.43</div>
<div class="cell " style="left:216px;top:152px;width:54px;height:19px;background:#c7e5ee;border-color:#cdd0e2"></div>
<div class="cell " style="left:270px;top:152px;width:54px;height:19px;background:#c7e5ee;border-color:#cdd0e2"></div>
<div class="cell " style="left:324px;top:152px;width:54px;height:19px;background:#c7e5ee;border-color:#cdd0e2"></div>
<div class="cell " style="left:378px;top:152px;width:59px;height:19px;background:#c7e5ee;border-color:#cdd0e2"></div>
<div class="cell red" style="left:0px;top:171px;width:54px;height:19px;background:#c7e5ee;border-color:#cdd0e2">2.225</div>
<div class="cell " style="left:54px;top:171px;width:54px;height:19px;background:#c7e5ee;border-color:#cdd0e2">19.20</div>
<div class="cell " style="left:108px;top:171px;width:54px;height:19px;background:#c7e5ee;border-color:#cdd0e2">2.48</div>
<div class="cell " style="left:162px;top:171px;width:54px;height:19px;background:#c7e5ee;border-color:#cdd0e2">-0.52</div>
<div class="cell " style="left:216px;top:171px;width:54px;height:19px;background:#c7e5ee;border-color:#cdd0e2"></div>
<div class="cell " style="left:270px;top:171px;width:54px;height:19px;background:#c7e5ee;border-color:#cdd0e2"></div>
<div class="cell " style="left:324px;top:171px;width:54px;height:19px;background:#c7e5ee;border-color:#cdd0e2"></div>
<div class="cell " style="left:378px;top:171px;width:59px;height:19px;background:#c7e5ee;border-color:#cdd0e2"></div>
<div class="cell grn" style="left:0px;top:190px;width:54px;height:19px;background:#c7e5ee;border-color:#cdd0e2">2.90</div>
<div class="cell " style="left:54px;top:190px;width:54px;height:19px;background:#c7e5ee;border-color:#cdd0e2">19.24</div>
<div class="cell " style="left:108px;top:190px;width:54px;height:19px;background:#c7e5ee;border-color:#cdd0e2">3.12</div>
<div class="cell " style="left:162px;top:190px;width:54px;height:19px;background:#c7e5ee;border-color:#cdd0e2">-0.63</div>
<div class="cell " style="left:216px;top:190px;width:54px;height:19px;background:#c7e5ee;border-color:#cdd0e2"></div>
<div class="cell " style="left:270px;top:190px;width:54px;height:19px;background:#c7e5ee;border-color:#cdd0e2"></div>
<div class="cell " style="left:324px;top:190px;width:54px;height:19px;background:#c7e5ee;border-color:#cdd0e2"></div>
<div class="cell " style="left:378px;top:190px;width:59px;height:19px;background:#c7e5ee;border-color:#cdd0e2"></div>
<div class="cell red" style="left:0px;top:209px;width:54px;height:19px;background:#c7e5ee;border-color:#cdd0e2">3.85</div>
<div class="cell " style="left:54px;top:209px;width:54px;height:19px;background:#c7e5ee;border-color:#cdd0e2">19.38</div>
<div class="cell " style="left:108px;top:209px;width:54px;height:19px;background:#c7e5ee;border-color:#cdd0e2">3.97</div>
<div class="cell " style="left:162px;top:209px;width:54px;height:19px;background:#c7e5ee;border-color:#cdd0e2">-0.77</div>
<div class="cell " style="left:216px;top:209px;width:54px;height:19px;background:#c7e5ee;border-color:#cdd0e2"></div>
<div class="cell " style="left:270px;top:209px;width:54px;height:19px;background:#c7e5ee;border-color:#cdd0e2"></div>
<div class="cell " style="left:324px;top:209px;width:54px;height:19px;background:#c7e5ee;border-color:#cdd0e2"></div>
<div class="cell " style="left:378px;top:209px;width:59px;height:19px;background:#c7e5ee;border-color:#cdd0e2"></div>
<div class="cell red" style="left:0px;top:228px;width:54px;height:19px;background:#c7e5ee;border-color:#cdd0e2">5.15</div>
<div class="cell " style="left:54px;top:228px;width:54px;height:19px;background:#c7e5ee;border-color:#cdd0e2">19.60</div>
<div class="cell " style="left:108px;top:228px;width:54px;height:19px;background:#c7e5ee;border-color:#cdd0e2">5.07</div>
<div class="cell " style="left:162px;top:228px;width:54px;height:19px;background:#c7e5ee;border-color:#cdd0e2">-0.95</div>
<div class="cell " style="left:216px;top:228px;width:54px;height:19px;background:#c7e5ee;border-color:#cdd0e2"></div>
<div class="cell " style="left:270px;top:228px;width:54px;height:19px;background:#c7e5ee;border-color:#cdd0e2"></div>
<div class="cell " style="left:324px;top:228px;width:54px;height:19px;background:#c7e5ee;border-color:#cdd0e2"></div>
<div class="cell " style="left:378px;top:228px;width:59px;height:19px;background:#c7e5ee;border-color:#cdd0e2"></div>
<div class="cell red" style="left:0px;top:247px;width:54px;height:19px;background:#c7e5ee;border-color:#cdd0e2">6.85</div>
<div class="cell " style="left:54px;top:247px;width:54px;height:19px;background:#c7e5ee;border-color:#cdd0e2">19.87</div>
<div class="cell " style="left:108px;top:247px;width:54px;height:19px;background:#c7e5ee;border-color:#cdd0e2">6.40</div>
<div class="cell " style="left:162px;top:247px;width:54px;height:19px;background:#c7e5ee;border-color:#cdd0e2">-1.16</div>
<div class="cell " style="left:216px;top:247px;width:54px;height:19px;background:#c7e5ee;border-color:#cdd0e2"></div>
<div class="cell " style="left:270px;top:247px;width:54px;height:19px;background:#c7e5ee;border-color:#cdd0e2"></div>
<div class="cell " style="left:324px;top:247px;width:54px;height:19px;background:#c7e5ee;border-color:#cdd0e2"></div>
<div class="cell " style="left:378px;top:247px;width:59px;height:19px;background:#c7e5ee;border-color:#cdd0e2"></div>
<div class="cell red" style="left:0px;top:266px;width:54px;height:19px;background:#a6bfdf;border-color:#cdd0e2">9.15</div>
<div class="cell " style="left:54px;top:266px;width:54px;height:19px;background:#a6bfdf;border-color:#cdd0e2">20.24</div>
<div class="cell " style="left:108px;top:266px;width:54px;height:19px;background:#a6bfdf;border-color:#cdd0e2">8.05</div>
<div class="cell " style="left:162px;top:266px;width:54px;height:19px;background:#a6bfdf;border-color:#cdd0e2">-1.41</div>
<div class="cell " style="left:216px;top:266px;width:54px;height:19px;background:#a6bfdf;border-color:#cdd0e2"></div>
<div class="cell " style="left:270px;top:266px;width:54px;height:19px;background:#a6bfdf;border-color:#cdd0e2"></div>
<div class="cell " style="left:324px;top:266px;width:54px;height:19px;background:#a6bfdf;border-color:#cdd0e2"></div>
<div class="cell " style="left:378px;top:266px;width:59px;height:19px;background:#a6bfdf;border-color:#cdd0e2"></div>
<div class="cell red" style="left:0px;top:285px;width:54px;height:19px;background:#a6bfdf;border-color:#cdd0e2">12.10</div>
<div class="cell " style="left:54px;top:285px;width:54px;height:19px;background:#a6bfdf;border-color:#cdd0e2">20.66</div>
<div class="cell " style="left:108px;top:285px;width:54px;height:19px;background:#a6bfdf;border-color:#cdd0e2">10.01</div>
<div class="cell " style="left:162px;top:285px;width:54px;height:19px;background:#a6bfdf;border-color:#cdd0e2">-1.69</div>
<div class="cell " style="left:216px;top:285px;width:54px;height:19px;background:#a6bfdf;border-color:#cdd0e2"></div>
<div class="cell " style="left:270px;top:285px;width:54px;height:19px;background:#a6bfdf;border-color:#cdd0e2"></div>
<div class="cell " style="left:324px;top:285px;width:54px;height:19px;background:#a6bfdf;border-color:#cdd0e2"></div>
<div class="cell " style="left:378px;top:285px;width:59px;height:19px;background:#a6bfdf;border-color:#cdd0e2"></div>
<div class="cell " style="left:0px;top:304px;width:54px;height:19px;background:#a6bfdf;border-color:#cdd0e2"></div>
<div class="cell " style="left:54px;top:304px;width:54px;height:19px;background:#a6bfdf;border-color:#cdd0e2"></div>
<div class="cell " style="left:108px;top:304px;width:54px;height:19px;background:#a6bfdf;border-color:#cdd0e2"></div>
<div class="cell " style="left:162px;top:304px;width:54px;height:19px;background:#a6bfdf;border-color:#cdd0e2"></div>
<div class="cell " style="left:216px;top:304px;width:54px;height:19px;background:#a6bfdf;border-color:#cdd0e2"></div>
<div class="cell " style="left:270px;top:304px;width:54px;height:19px;background:#a6bfdf;border-color:#cdd0e2"></div>
<div class="cell " style="left:324px;top:304px;width:54px;height:19px;background:#a6bfdf;border-color:#cdd0e2"></div>
<div class="cell " style="left:378px;top:304px;width:59px;height:19px;background:#a6bfdf;border-color:#cdd0e2"></div>
</div>
<div style="left:521px;top:249px;width:438px;height:353px;border:1px solid #9aa6bd;background:#d6dbe9"></div>
<div class="t" style="left:527px;top:252.8px;font-weight:bold;color:#000;font-size:13px">Weekly</div>
<div class="t c" style="left:587px;width:300px;top:252.8px;font-weight:bold;color:#000;font-size:13px;letter-spacing:.35px">13 abr. 26 (17)</div>
<div class="t r" style="left:654px;width:300px;top:252.8px;font-weight:bold;color:#000;font-size:13px;letter-spacing:.8px">29.44%</div>
<div style="left:522px;top:271px;width:436px;height:1px;background:#9aa6bd"></div>
<div class="hd" style="left:522px;top:272px;width:52px;height:21px;">Mid</div>
<div class="hd" style="left:574px;top:272px;width:52px;height:21px;">IV</div>
<div class="hd" style="left:626px;top:272px;width:52px;height:21px;">Delta</div>
<div class="hd" style="left:678px;top:272px;width:52px;height:21px;">Theta</div>
<div class="hd" style="left:730px;top:272px;width:52px;height:21px;">OrigPr...</div>
<div class="hd" style="left:782px;top:272px;width:52px;height:21px;">IVChg</div>
<div class="hd" style="left:834px;top:272px;width:52px;height:21px;">Model</div>
<div class="hd" style="left:886px;top:272px;width:56px;height:21px;">Pos</div>
<div class="hd" style="left:942px;top:272px;width:17px;height:21px;"></div>
<div style="left:522px;top:293px;width:420px;height:308px;overflow:hidden">
<div class="cell red" style="left:0px;top:0px;width:52px;height:19px;background:#c7e5ee;border-color:#cdd0e2">0.575</div>
<div class="cell " style="left:52px;top:0px;width:52px;height:19px;background:#c7e5ee;border-color:#cdd0e2">19.68</div>
<div class="cell " style="left:104px;top:0px;width:52px;height:19px;background:#c7e5ee;border-color:#cdd0e2">0.66</div>
<div class="cell " style="left:156px;top:0px;width:52px;height:19px;background:#c7e5ee;border-color:#cdd0e2">-0.15</div>
<div class="cell " style="left:208px;top:0px;width:52px;height:19px;background:#c7e5ee;border-color:#cdd0e2"></div>
<div class="cell " style="left:260px;top:0px;width:52px;height:19px;background:#c7e5ee;border-color:#cdd0e2"></div>
<div class="cell " style="left:312px;top:0px;width:52px;height:19px;background:#c7e5ee;border-color:#cdd0e2"></div>
<div class="cell " style="left:364px;top:0px;width:56px;height:19px;background:#c7e5ee;border-color:#cdd0e2"></div>
<div class="cell red" style="left:0px;top:19px;width:52px;height:19px;background:#c7e5ee;border-color:#cdd0e2">0.65</div>
<div class="cell " style="left:52px;top:19px;width:52px;height:19px;background:#c7e5ee;border-color:#cdd0e2">19.40</div>
<div class="cell " style="left:104px;top:19px;width:52px;height:19px;background:#c7e5ee;border-color:#cdd0e2">0.75</div>
<div class="cell " style="left:156px;top:19px;width:52px;height:19px;background:#c7e5ee;border-color:#cdd0e2">-0.17</div>
<div class="cell " style="left:208px;top:19px;width:52px;height:19px;background:#c7e5ee;border-color:#cdd0e2"></div>
<div class="cell " style="left:260px;top:19px;width:52px;height:19px;background:#c7e5ee;border-color:#cdd0e2"></div>
<div class="cell " style="left:312px;top:19px;width:52px;height:19px;background:#c7e5ee;border-color:#cdd0e2"></div>
<div class="cell " style="left:364px;top:19px;width:56px;height:19px;background:#c7e5ee;border-color:#cdd0e2"></div>
<div class="cell red" style="left:0px;top:38px;width:52px;height:19px;background:#c7e5ee;border-color:#cdd0e2">0.725</div>
<div class="cell " style="left:52px;top:38px;width:52px;height:19px;background:#c7e5ee;border-color:#cdd0e2">19.05</div>
<div class="cell " style="left:104px;top:38px;width:52px;height:19px;background:#c7e5ee;border-color:#cdd0e2">0.84</div>
<div class="cell " style="left:156px;top:38px;width:52px;height:19px;background:#c7e5ee;border-color:#cdd0e2">-0.18</div>
<div class="cell " style="left:208px;top:38px;width:52px;height:19px;background:#c7e5ee;border-color:#cdd0e2"></div>
<div class="cell " style="left:260px;top:38px;width:52px;height:19px;background:#c7e5ee;border-color:#cdd0e2"></div>
<div class="cell " style="left:312px;top:38px;width:52px;height:19px;background:#c7e5ee;border-color:#cdd0e2"></div>
<div class="cell " style="left:364px;top:38px;width:56px;height:19px;background:#c7e5ee;border-color:#cdd0e2"></div>
<div class="cell red" style="left:0px;top:57px;width:52px;height:19px;background:#c7e5ee;border-color:#cdd0e2">0.85</div>
<div class="cell " style="left:52px;top:57px;width:52px;height:19px;background:#c7e5ee;border-color:#cdd0e2">18.82</div>
<div class="cell " style="left:104px;top:57px;width:52px;height:19px;background:#c7e5ee;border-color:#cdd0e2">0.98</div>
<div class="cell " style="left:156px;top:57px;width:52px;height:19px;background:#c7e5ee;border-color:#cdd0e2">-0.21</div>
<div class="cell " style="left:208px;top:57px;width:52px;height:19px;background:#c7e5ee;border-color:#cdd0e2"></div>
<div class="cell " style="left:260px;top:57px;width:52px;height:19px;background:#c7e5ee;border-color:#cdd0e2"></div>
<div class="cell " style="left:312px;top:57px;width:52px;height:19px;background:#c7e5ee;border-color:#cdd0e2"></div>
<div class="cell " style="left:364px;top:57px;width:56px;height:19px;background:#c7e5ee;border-color:#cdd0e2"></div>
<div class="cell red" style="left:0px;top:76px;width:52px;height:19px;background:#c7e5ee;border-color:#cdd0e2">0.975</div>
<div class="cell " style="left:52px;top:76px;width:52px;height:19px;background:#c7e5ee;border-color:#cdd0e2">18.53</div>
<div class="cell " style="left:104px;top:76px;width:52px;height:19px;background:#c7e5ee;border-color:#cdd0e2">1.12</div>
<div class="cell " style="left:156px;top:76px;width:52px;height:19px;background:#c7e5ee;border-color:#cdd0e2">-0.23</div>
<div class="cell " style="left:208px;top:76px;width:52px;height:19px;background:#c7e5ee;border-color:#cdd0e2"></div>
<div class="cell " style="left:260px;top:76px;width:52px;height:19px;background:#c7e5ee;border-color:#cdd0e2"></div>
<div class="cell " style="left:312px;top:76px;width:52px;height:19px;background:#c7e5ee;border-color:#cdd0e2"></div>
<div class="cell " style="left:364px;top:76px;width:56px;height:19px;background:#c7e5ee;border-color:#cdd0e2"></div>
<div class="cell red" style="left:0px;top:95px;width:52px;height:19px;background:#c7e5ee;border-color:#cdd0e2">1.15</div>
<div class="cell " style="left:52px;top:95px;width:52px;height:19px;background:#c7e5ee;border-color:#cdd0e2">18.31</div>
<div class="cell " style="left:104px;top:95px;width:52px;height:19px;background:#c7e5ee;border-color:#cdd0e2">1.31</div>
<div class="cell " style="left:156px;top:95px;width:52px;height:19px;background:#c7e5ee;border-color:#cdd0e2">-0.26</div>
<div class="cell " style="left:208px;top:95px;width:52px;height:19px;background:#c7e5ee;border-color:#cdd0e2"></div>
<div class="cell " style="left:260px;top:95px;width:52px;height:19px;background:#c7e5ee;border-color:#cdd0e2"></div>
<div class="cell " style="left:312px;top:95px;width:52px;height:19px;background:#c7e5ee;border-color:#cdd0e2"></div>
<div class="cell " style="left:364px;top:95px;width:56px;height:19px;background:#c7e5ee;border-color:#cdd0e2"></div>
<div class="cell red" style="left:0px;top:114px;width:52px;height:19px;background:#c7e5ee;border-color:#cdd0e2">1.40</div>
<div class="cell " style="left:52px;top:114px;width:52px;height:19px;background:#c7e5ee;border-color:#cdd0e2">18.17</div>
<div class="cell " style="left:104px;top:114px;width:52px;height:19px;background:#c7e5ee;border-color:#cdd0e2">1.58</div>
<div class="cell " style="left:156px;top:114px;width:52px;height:19px;background:#c7e5ee;border-color:#cdd0e2">-0.30</div>
<div class="cell " style="left:208px;top:114px;width:52px;height:19px;background:#c7e5ee;border-color:#cdd0e2"></div>
<div class="cell " style="left:260px;top:114px;width:52px;height:19px;background:#c7e5ee;border-color:#cdd0e2"></div>
<div class="cell " style="left:312px;top:114px;width:52px;height:19px;background:#c7e5ee;border-color:#cdd0e2"></div>
<div class="cell " style="left:364px;top:114px;width:56px;height:19px;background:#c7e5ee;border-color:#cdd0e2"></div>
<div class="cell grn" style="left:0px;top:133px;width:52px;height:19px;background:#c7e5ee;border-color:#cdd0e2">1.75</div>
<div class="cell " style="left:52px;top:133px;width:52px;height:19px;background:#c7e5ee;border-color:#cdd0e2">18.08</div>
<div class="cell " style="left:104px;top:133px;width:52px;height:19px;background:#c7e5ee;border-color:#cdd0e2">1.94</div>
<div class="cell " style="left:156px;top:133px;width:52px;height:19px;background:#c7e5ee;border-color:#cdd0e2">-0.36</div>
<div class="cell " style="left:208px;top:133px;width:52px;height:19px;background:#c7e5ee;border-color:#cdd0e2"></div>
<div class="cell " style="left:260px;top:133px;width:52px;height:19px;background:#c7e5ee;border-color:#cdd0e2"></div>
<div class="cell " style="left:312px;top:133px;width:52px;height:19px;background:#c7e5ee;border-color:#cdd0e2"></div>
<div class="cell " style="left:364px;top:133px;width:56px;height:19px;background:#c7e5ee;border-color:#cdd0e2"></div>
<div class="cell grn" style="left:0px;top:152px;width:52px;height:19px;background:#c7e5ee;border-color:#cdd0e2">2.20</div>
<div class="cell " style="left:52px;top:152px;width:52px;height:19px;background:#c7e5ee;border-color:#cdd0e2">18.03</div>
<div class="cell " style="left:104px;top:152px;width:52px;height:19px;background:#c7e5ee;border-color:#cdd0e2">2.38</div>
<div class="cell " style="left:156px;top:152px;width:52px;height:19px;background:#c7e5ee;border-color:#cdd0e2">-0.43</div>
<div class="cell " style="left:208px;top:152px;width:52px;height:19px;background:#c7e5ee;border-color:#cdd0e2"></div>
<div class="cell " style="left:260px;top:152px;width:52px;height:19px;background:#c7e5ee;border-color:#cdd0e2"></div>
<div class="cell " style="left:312px;top:152px;width:52px;height:19px;background:#c7e5ee;border-color:#cdd0e2"></div>
<div class="cell " style="left:364px;top:152px;width:56px;height:19px;background:#c7e5ee;border-color:#cdd0e2"></div>
<div class="cell red" style="left:0px;top:171px;width:52px;height:19px;background:#c7e5ee;border-color:#cdd0e2">2.825</div>
<div class="cell " style="left:52px;top:171px;width:52px;height:19px;background:#c7e5ee;border-color:#cdd0e2">18.05</div>
<div class="cell " style="left:104px;top:171px;width:52px;height:19px;background:#c7e5ee;border-color:#cdd0e2">2.96</div>
<div class="cell " style="left:156px;top:171px;width:52px;height:19px;background:#c7e5ee;border-color:#cdd0e2">-0.51</div>
<div class="cell " style="left:208px;top:171px;width:52px;height:19px;background:#c7e5ee;border-color:#cdd0e2"></div>
<div class="cell " style="left:260px;top:171px;width:52px;height:19px;background:#c7e5ee;border-color:#cdd0e2"></div>
<div class="cell " style="left:312px;top:171px;width:52px;height:19px;background:#c7e5ee;border-color:#cdd0e2"></div>
<div class="cell " style="left:364px;top:171px;width:56px;height:19px;background:#c7e5ee;border-color:#cdd0e2"></div>
<div class="cell red" style="left:0px;top:190px;width:52px;height:19px;background:#c7e5ee;border-color:#cdd0e2">3.65</div>
<div class="cell " style="left:52px;top:190px;width:52px;height:19px;background:#c7e5ee;border-color:#cdd0e2">18.12</div>
<div class="cell " style="left:104px;top:190px;width:52px;height:19px;background:#c7e5ee;border-color:#cdd0e2">3.70</div>
<div class="cell " style="left:156px;top:190px;width:52px;height:19px;background:#c7e5ee;border-color:#cdd0e2">-0.62</div>
<div class="cell " style="left:208px;top:190px;width:52px;height:19px;background:#c7e5ee;border-color:#cdd0e2"></div>
<div class="cell " style="left:260px;top:190px;width:52px;height:19px;background:#c7e5ee;border-color:#cdd0e2"></div>
<div class="cell " style="left:312px;top:190px;width:52px;height:19px;background:#c7e5ee;border-color:#cdd0e2"></div>
<div class="cell " style="left:364px;top:190px;width:56px;height:19px;background:#c7e5ee;border-color:#cdd0e2"></div>
<div class="cell red" style="left:0px;top:209px;width:52px;height:19px;background:#c7e5ee;border-color:#cdd0e2">4.85</div>
<div class="cell " style="left:52px;top:209px;width:52px;height:19px;background:#c7e5ee;border-color:#cdd0e2">18.31</div>
<div class="cell " style="left:104px;top:209px;width:52px;height:19px;background:#c7e5ee;border-color:#cdd0e2">4.69</div>
<div class="cell " style="left:156px;top:209px;width:52px;height:19px;background:#c7e5ee;border-color:#cdd0e2">-0.76</div>
<div class="cell " style="left:208px;top:209px;width:52px;height:19px;background:#c7e5ee;border-color:#cdd0e2"></div>
<div class="cell " style="left:260px;top:209px;width:52px;height:19px;background:#c7e5ee;border-color:#cdd0e2"></div>
<div class="cell " style="left:312px;top:209px;width:52px;height:19px;background:#c7e5ee;border-color:#cdd0e2"></div>
<div class="cell " style="left:364px;top:209px;width:56px;height:19px;background:#c7e5ee;border-color:#cdd0e2"></div>
<div class="cell red" style="left:0px;top:228px;width:52px;height:19px;background:#c7e5ee;border-color:#cdd0e2">6.45</div>
<div class="cell " style="left:52px;top:228px;width:52px;height:19px;background:#c7e5ee;border-color:#cdd0e2">18.59</div>
<div class="cell " style="left:104px;top:228px;width:52px;height:19px;background:#c7e5ee;border-color:#cdd0e2">5.92</div>
<div class="cell " style="left:156px;top:228px;width:52px;height:19px;background:#c7e5ee;border-color:#cdd0e2">-0.93</div>
<div class="cell " style="left:208px;top:228px;width:52px;height:19px;background:#c7e5ee;border-color:#cdd0e2"></div>
<div class="cell " style="left:260px;top:228px;width:52px;height:19px;background:#c7e5ee;border-color:#cdd0e2"></div>
<div class="cell " style="left:312px;top:228px;width:52px;height:19px;background:#c7e5ee;border-color:#cdd0e2"></div>
<div class="cell " style="left:364px;top:228px;width:56px;height:19px;background:#c7e5ee;border-color:#cdd0e2"></div>
<div class="cell red" style="left:0px;top:247px;width:52px;height:19px;background:#a6bfdf;border-color:#cdd0e2">8.55</div>
<div class="cell " style="left:52px;top:247px;width:52px;height:19px;background:#a6bfdf;border-color:#cdd0e2">18.89</div>
<div class="cell " style="left:104px;top:247px;width:52px;height:19px;background:#a6bfdf;border-color:#cdd0e2">7.43</div>
<div class="cell " style="left:156px;top:247px;width:52px;height:19px;background:#a6bfdf;border-color:#cdd0e2">-1.13</div>
<div class="cell " style="left:208px;top:247px;width:52px;height:19px;background:#a6bfdf;border-color:#cdd0e2"></div>
<div class="cell " style="left:260px;top:247px;width:52px;height:19px;background:#a6bfdf;border-color:#cdd0e2"></div>
<div class="cell " style="left:312px;top:247px;width:52px;height:19px;background:#a6bfdf;border-color:#cdd0e2"></div>
<div class="cell " style="left:364px;top:247px;width:56px;height:19px;background:#a6bfdf;border-color:#cdd0e2"></div>
<div class="cell red" style="left:0px;top:266px;width:52px;height:19px;background:#a6bfdf;border-color:#cdd0e2">11.25</div>
<div class="cell " style="left:52px;top:266px;width:52px;height:19px;background:#a6bfdf;border-color:#cdd0e2">19.25</div>
<div class="cell " style="left:104px;top:266px;width:52px;height:19px;background:#a6bfdf;border-color:#cdd0e2">9.21</div>
<div class="cell " style="left:156px;top:266px;width:52px;height:19px;background:#a6bfdf;border-color:#cdd0e2">-1.36</div>
<div class="cell " style="left:208px;top:266px;width:52px;height:19px;background:#a6bfdf;border-color:#cdd0e2"></div>
<div class="cell " style="left:260px;top:266px;width:52px;height:19px;background:#a6bfdf;border-color:#cdd0e2"></div>
<div class="cell " style="left:312px;top:266px;width:52px;height:19px;background:#a6bfdf;border-color:#cdd0e2"></div>
<div class="cell " style="left:364px;top:266px;width:56px;height:19px;background:#a6bfdf;border-color:#cdd0e2"></div>
<div class="cell red" style="left:0px;top:285px;width:52px;height:19px;background:#a6bfdf;border-color:#cdd0e2">14.70</div>
<div class="cell " style="left:52px;top:285px;width:52px;height:19px;background:#a6bfdf;border-color:#cdd0e2">19.69</div>
<div class="cell " style="left:104px;top:285px;width:52px;height:19px;background:#a6bfdf;border-color:#cdd0e2">11.30</div>
<div class="cell " style="left:156px;top:285px;width:52px;height:19px;background:#a6bfdf;border-color:#cdd0e2">-1.61</div>
<div class="cell " style="left:208px;top:285px;width:52px;height:19px;background:#a6bfdf;border-color:#cdd0e2"></div>
<div class="cell " style="left:260px;top:285px;width:52px;height:19px;background:#a6bfdf;border-color:#cdd0e2"></div>
<div class="cell " style="left:312px;top:285px;width:52px;height:19px;background:#a6bfdf;border-color:#cdd0e2"></div>
<div class="cell " style="left:364px;top:285px;width:56px;height:19px;background:#a6bfdf;border-color:#cdd0e2"></div>
<div class="cell " style="left:0px;top:304px;width:52px;height:19px;background:#a6bfdf;border-color:#cdd0e2"></div>
<div class="cell " style="left:52px;top:304px;width:52px;height:19px;background:#a6bfdf;border-color:#cdd0e2"></div>
<div class="cell " style="left:104px;top:304px;width:52px;height:19px;background:#a6bfdf;border-color:#cdd0e2"></div>
<div class="cell " style="left:156px;top:304px;width:52px;height:19px;background:#a6bfdf;border-color:#cdd0e2"></div>
<div class="cell " style="left:208px;top:304px;width:52px;height:19px;background:#a6bfdf;border-color:#cdd0e2"></div>
<div class="cell " style="left:260px;top:304px;width:52px;height:19px;background:#a6bfdf;border-color:#cdd0e2"></div>
<div class="cell " style="left:312px;top:304px;width:52px;height:19px;background:#a6bfdf;border-color:#cdd0e2"></div>
<div class="cell " style="left:364px;top:304px;width:56px;height:19px;background:#a6bfdf;border-color:#cdd0e2"></div>
</div>
<div style="left:941px;top:293px;width:17px;height:308px;background:#d3d8e6"></div>
<svg style="left:945px;top:298px" width="9" height="5"><path d="M0 5 L4.5 0 L9 5Z" fill="#6e7c9a"/></svg>
<svg style="left:945px;top:591px" width="9" height="5"><path d="M0 0 H9 L4.5 5Z" fill="#6e7c9a"/></svg>
<div style="left:945px;top:394px;width:9px;height:17px;background:#8e9ab4"></div>
<div style="left:17px;top:614px;width:60px;height:288px;border:1px solid #9aa6bd;background:#fff"></div>
<div class="hd" style="left:18px;top:615px;width:58px;height:21px;border-right:none;letter-spacing:-.2px">PUTS</div>
<div style="left:18px;top:636px;width:58px;height:265px;overflow:hidden;background:#fff">
<div class="cell" style="left:0;top:0px;width:58px;height:19px;text-align:center;padding:0;border-right:none;background:#ebebeb">6475</div>
<div class="cell" style="left:0;top:19px;width:58px;height:19px;text-align:center;padding:0;border-right:none;background:#ebebeb">6450</div>
<div class="cell" style="left:0;top:38px;width:58px;height:19px;text-align:center;padding:0;border-right:none;background:#ebebeb;color:#f01010">6425</div>
<div class="cell" style="left:0;top:57px;width:58px;height:19px;text-align:center;padding:0;border-right:none;">6400</div>
<div class="cell" style="left:0;top:76px;width:58px;height:19px;text-align:center;padding:0;border-right:none;">6375</div>
<div class="cell" style="left:0;top:95px;width:58px;height:19px;text-align:center;padding:0;border-right:none;">6350</div>
<div class="cell" style="left:0;top:114px;width:58px;height:19px;text-align:center;padding:0;border-right:none;">6325</div>
<div class="cell" style="left:0;top:133px;width:58px;height:19px;text-align:center;padding:0;border-right:none;">6300</div>
<div class="cell" style="left:0;top:152px;width:58px;height:19px;text-align:center;padding:0;border-right:none;">6275</div>
<div class="cell" style="left:0;top:171px;width:58px;height:19px;text-align:center;padding:0;border-right:none;">6250</div>
<div class="cell" style="left:0;top:190px;width:58px;height:19px;text-align:center;padding:0;border-right:none;">6225</div>
<div class="cell" style="left:0;top:209px;width:58px;height:19px;text-align:center;padding:0;border-right:none;">6200</div>
<div class="cell" style="left:0;top:228px;width:58px;height:19px;text-align:center;padding:0;border-right:none;">6175</div>
<div class="cell" style="left:0;top:247px;width:58px;height:19px;text-align:center;padding:0;border-right:none;">6150</div>
</div>
<div style="left:80px;top:614px;width:438px;height:288px;border:1px solid #9aa6bd;background:#fff"></div>
<div class="hd" style="left:81px;top:615px;width:54px;height:21px;">Mid</div>
<div class="hd" style="left:135px;top:615px;width:54px;height:21px;">IV</div>
<div class="hd" style="left:189px;top:615px;width:54px;height:21px;">Delta</div>
<div class="hd" style="left:243px;top:615px;width:54px;height:21px;">Theta</div>
<div class="hd" style="left:297px;top:615px;width:54px;height:21px;">OrigPri...</div>
<div class="hd" style="left:351px;top:615px;width:54px;height:21px;">IVChg</div>
<div class="hd" style="left:405px;top:615px;width:54px;height:21px;">Model</div>
<div class="hd" style="left:459px;top:615px;width:59px;height:21px;">Pos</div>
<div style="left:81px;top:636px;width:437px;height:265px;overflow:hidden">
<div class="cell grn" style="left:0px;top:0px;width:54px;height:19px;background:#a6bfdf;border-color:#cdd0e2">157.50</div>
<div class="cell " style="left:54px;top:0px;width:54px;height:19px;background:#a6bfdf;border-color:#cdd0e2">26.34</div>
<div class="cell " style="left:108px;top:0px;width:54px;height:19px;background:#a6bfdf;border-color:#cdd0e2">-54.65</div>
<div class="cell " style="left:162px;top:0px;width:54px;height:19px;background:#a6bfdf;border-color:#cdd0e2">-4.31</div>
<div class="cell " style="left:216px;top:0px;width:54px;height:19px;background:#a6bfdf;border-color:#cdd0e2">101.65</div>
<div class="cell " style="left:270px;top:0px;width:54px;height:19px;background:#a6bfdf;border-color:#cdd0e2">-4.36</div>
<div class="cell " style="left:324px;top:0px;width:54px;height:19px;background:#a6bfdf;border-color:#cdd0e2"></div>
<div class="cell " style="left:378px;top:0px;width:59px;height:19px;background:#a6bfdf;border-color:#cdd0e2">+2</div>
<div class="cell grn" style="left:0px;top:19px;width:54px;height:19px;background:#a6bfdf;border-color:#cdd0e2">145.70</div>
<div class="cell " style="left:54px;top:19px;width:54px;height:19px;background:#a6bfdf;border-color:#cdd0e2">26.73</div>
<div class="cell " style="left:108px;top:19px;width:54px;height:19px;background:#a6bfdf;border-color:#cdd0e2">-51.61</div>
<div class="cell " style="left:162px;top:19px;width:54px;height:19px;background:#a6bfdf;border-color:#cdd0e2">-4.43</div>
<div class="cell " style="left:216px;top:19px;width:54px;height:19px;background:#a6bfdf;border-color:#cdd0e2"></div>
<div class="cell " style="left:270px;top:19px;width:54px;height:19px;background:#a6bfdf;border-color:#cdd0e2"></div>
<div class="cell " style="left:324px;top:19px;width:54px;height:19px;background:#a6bfdf;border-color:#cdd0e2"></div>
<div class="cell " style="left:378px;top:19px;width:59px;height:19px;background:#a6bfdf;border-color:#cdd0e2"></div>
<div class="cell grn" style="left:0px;top:38px;width:54px;height:19px;background:#a6bfdf;border-color:#cdd0e2">134.60</div>
<div class="cell " style="left:54px;top:38px;width:54px;height:19px;background:#a6bfdf;border-color:#cdd0e2">27.12</div>
<div class="cell " style="left:108px;top:38px;width:54px;height:19px;background:#a6bfdf;border-color:#cdd0e2">-48.64</div>
<div class="cell " style="left:162px;top:38px;width:54px;height:19px;background:#a6bfdf;border-color:#cdd0e2">-4.52</div>
<div class="cell " style="left:216px;top:38px;width:54px;height:19px;background:#a6bfdf;border-color:#cdd0e2"></div>
<div class="cell " style="left:270px;top:38px;width:54px;height:19px;background:#a6bfdf;border-color:#cdd0e2"></div>
<div class="cell " style="left:324px;top:38px;width:54px;height:19px;background:#a6bfdf;border-color:#cdd0e2"></div>
<div class="cell " style="left:378px;top:38px;width:59px;height:19px;background:#a6bfdf;border-color:#cdd0e2"></div>
<div class="cell grn" style="left:0px;top:57px;width:54px;height:19px;background:#a6bfdf;border-color:#cdd0e2">124.10</div>
<div class="cell " style="left:54px;top:57px;width:54px;height:19px;background:#a6bfdf;border-color:#cdd0e2">27.48</div>
<div class="cell " style="left:108px;top:57px;width:54px;height:19px;background:#a6bfdf;border-color:#cdd0e2">-45.74</div>
<div class="cell " style="left:162px;top:57px;width:54px;height:19px;background:#a6bfdf;border-color:#cdd0e2">-4.58</div>
<div class="cell " style="left:216px;top:57px;width:54px;height:19px;background:#a6bfdf;border-color:#cdd0e2"></div>
<div class="cell " style="left:270px;top:57px;width:54px;height:19px;background:#a6bfdf;border-color:#cdd0e2"></div>
<div class="cell " style="left:324px;top:57px;width:54px;height:19px;background:#a6bfdf;border-color:#cdd0e2"></div>
<div class="cell " style="left:378px;top:57px;width:59px;height:19px;background:#a6bfdf;border-color:#cdd0e2"></div>
<div class="cell grn" style="left:0px;top:76px;width:54px;height:19px;background:#a6bfdf;border-color:#cdd0e2">114.30</div>
<div class="cell " style="left:54px;top:76px;width:54px;height:19px;background:#a6bfdf;border-color:#cdd0e2">27.84</div>
<div class="cell " style="left:108px;top:76px;width:54px;height:19px;background:#a6bfdf;border-color:#cdd0e2">-42.94</div>
<div class="cell " style="left:162px;top:76px;width:54px;height:19px;background:#a6bfdf;border-color:#cdd0e2">-4.61</div>
<div class="cell " style="left:216px;top:76px;width:54px;height:19px;background:#a6bfdf;border-color:#cdd0e2">88.01</div>
<div class="cell " style="left:270px;top:76px;width:54px;height:19px;background:#a6bfdf;border-color:#cdd0e2">1.73</div>
<div class="cell " style="left:324px;top:76px;width:54px;height:19px;background:#a6bfdf;border-color:#cdd0e2"></div>
<div class="cell " style="left:378px;top:76px;width:59px;height:19px;background:#a6bfdf;border-color:#cdd0e2">-3</div>
<div class="cell grn" style="left:0px;top:95px;width:54px;height:19px;background:#a6bfdf;border-color:#cdd0e2">105.30</div>
<div class="cell " style="left:54px;top:95px;width:54px;height:19px;background:#a6bfdf;border-color:#cdd0e2">28.23</div>
<div class="cell " style="left:108px;top:95px;width:54px;height:19px;background:#a6bfdf;border-color:#cdd0e2">-40.23</div>
<div class="cell " style="left:162px;top:95px;width:54px;height:19px;background:#a6bfdf;border-color:#cdd0e2">-4.63</div>
<div class="cell " style="left:216px;top:95px;width:54px;height:19px;background:#a6bfdf;border-color:#cdd0e2">107.18</div>
<div class="cell " style="left:270px;top:95px;width:54px;height:19px;background:#a6bfdf;border-color:#cdd0e2">-3.80</div>
<div class="cell " style="left:324px;top:95px;width:54px;height:19px;background:#a6bfdf;border-color:#cdd0e2"></div>
<div class="cell " style="left:378px;top:95px;width:59px;height:19px;background:#a6bfdf;border-color:#cdd0e2">-1</div>
<div class="cell grn" style="left:0px;top:114px;width:54px;height:19px;background:#a6bfdf;border-color:#cdd0e2">96.60</div>
<div class="cell " style="left:54px;top:114px;width:54px;height:19px;background:#a6bfdf;border-color:#cdd0e2">28.56</div>
<div class="cell " style="left:108px;top:114px;width:54px;height:19px;background:#a6bfdf;border-color:#cdd0e2">-37.61</div>
<div class="cell " style="left:162px;top:114px;width:54px;height:19px;background:#a6bfdf;border-color:#cdd0e2">-4.61</div>
<div class="cell " style="left:216px;top:114px;width:54px;height:19px;background:#a6bfdf;border-color:#cdd0e2"></div>
<div class="cell " style="left:270px;top:114px;width:54px;height:19px;background:#a6bfdf;border-color:#cdd0e2"></div>
<div class="cell " style="left:324px;top:114px;width:54px;height:19px;background:#a6bfdf;border-color:#cdd0e2"></div>
<div class="cell " style="left:378px;top:114px;width:59px;height:19px;background:#a6bfdf;border-color:#cdd0e2"></div>
<div class="cell grn" style="left:0px;top:133px;width:54px;height:19px;background:#a6bfdf;border-color:#cdd0e2">88.70</div>
<div class="cell " style="left:54px;top:133px;width:54px;height:19px;background:#a6bfdf;border-color:#cdd0e2">28.92</div>
<div class="cell " style="left:108px;top:133px;width:54px;height:19px;background:#a6bfdf;border-color:#cdd0e2">-35.10</div>
<div class="cell " style="left:162px;top:133px;width:54px;height:19px;background:#a6bfdf;border-color:#cdd0e2">-4.57</div>
<div class="cell " style="left:216px;top:133px;width:54px;height:19px;background:#a6bfdf;border-color:#cdd0e2"></div>
<div class="cell " style="left:270px;top:133px;width:54px;height:19px;background:#a6bfdf;border-color:#cdd0e2"></div>
<div class="cell " style="left:324px;top:133px;width:54px;height:19px;background:#a6bfdf;border-color:#cdd0e2"></div>
<div class="cell " style="left:378px;top:133px;width:59px;height:19px;background:#a6bfdf;border-color:#cdd0e2"></div>
<div class="cell grn" style="left:0px;top:152px;width:54px;height:19px;background:#a6bfdf;border-color:#cdd0e2">81.30</div>
<div class="cell " style="left:54px;top:152px;width:54px;height:19px;background:#a6bfdf;border-color:#cdd0e2">29.26</div>
<div class="cell " style="left:108px;top:152px;width:54px;height:19px;background:#a6bfdf;border-color:#cdd0e2">-32.71</div>
<div class="cell " style="left:162px;top:152px;width:54px;height:19px;background:#a6bfdf;border-color:#cdd0e2">-4.52</div>
<div class="cell " style="left:216px;top:152px;width:54px;height:19px;background:#a6bfdf;border-color:#cdd0e2"></div>
<div class="cell " style="left:270px;top:152px;width:54px;height:19px;background:#a6bfdf;border-color:#cdd0e2"></div>
<div class="cell " style="left:324px;top:152px;width:54px;height:19px;background:#a6bfdf;border-color:#cdd0e2"></div>
<div class="cell " style="left:378px;top:152px;width:59px;height:19px;background:#a6bfdf;border-color:#cdd0e2"></div>
<div class="cell grn" style="left:0px;top:171px;width:54px;height:19px;background:#a6bfdf;border-color:#cdd0e2">74.50</div>
<div class="cell " style="left:54px;top:171px;width:54px;height:19px;background:#a6bfdf;border-color:#cdd0e2">29.62</div>
<div class="cell " style="left:108px;top:171px;width:54px;height:19px;background:#a6bfdf;border-color:#cdd0e2">-30.43</div>
<div class="cell " style="left:162px;top:171px;width:54px;height:19px;background:#a6bfdf;border-color:#cdd0e2">-4.45</div>
<div class="cell " style="left:216px;top:171px;width:54px;height:19px;background:#a6bfdf;border-color:#cdd0e2"></div>
<div class="cell " style="left:270px;top:171px;width:54px;height:19px;background:#a6bfdf;border-color:#cdd0e2"></div>
<div class="cell " style="left:324px;top:171px;width:54px;height:19px;background:#a6bfdf;border-color:#cdd0e2"></div>
<div class="cell " style="left:378px;top:171px;width:59px;height:19px;background:#a6bfdf;border-color:#cdd0e2"></div>
<div class="cell grn" style="left:0px;top:190px;width:54px;height:19px;background:#a6bfdf;border-color:#cdd0e2">68.10</div>
<div class="cell " style="left:54px;top:190px;width:54px;height:19px;background:#a6bfdf;border-color:#cdd0e2">29.95</div>
<div class="cell " style="left:108px;top:190px;width:54px;height:19px;background:#a6bfdf;border-color:#cdd0e2">-28.25</div>
<div class="cell " style="left:162px;top:190px;width:54px;height:19px;background:#a6bfdf;border-color:#cdd0e2">-4.35</div>
<div class="cell " style="left:216px;top:190px;width:54px;height:19px;background:#a6bfdf;border-color:#cdd0e2"></div>
<div class="cell " style="left:270px;top:190px;width:54px;height:19px;background:#a6bfdf;border-color:#cdd0e2"></div>
<div class="cell " style="left:324px;top:190px;width:54px;height:19px;background:#a6bfdf;border-color:#cdd0e2"></div>
<div class="cell " style="left:378px;top:190px;width:59px;height:19px;background:#a6bfdf;border-color:#cdd0e2"></div>
<div class="cell grn" style="left:0px;top:209px;width:54px;height:19px;background:#a6bfdf;border-color:#cdd0e2">62.30</div>
<div class="cell " style="left:54px;top:209px;width:54px;height:19px;background:#a6bfdf;border-color:#cdd0e2">30.31</div>
<div class="cell " style="left:108px;top:209px;width:54px;height:19px;background:#a6bfdf;border-color:#cdd0e2">-26.20</div>
<div class="cell " style="left:162px;top:209px;width:54px;height:19px;background:#a6bfdf;border-color:#cdd0e2">-4.25</div>
<div class="cell " style="left:216px;top:209px;width:54px;height:19px;background:#a6bfdf;border-color:#cdd0e2">61.10</div>
<div class="cell " style="left:270px;top:209px;width:54px;height:19px;background:#a6bfdf;border-color:#cdd0e2">-3.71</div>
<div class="cell " style="left:324px;top:209px;width:54px;height:19px;background:#a6bfdf;border-color:#cdd0e2"></div>
<div class="cell " style="left:378px;top:209px;width:59px;height:19px;background:#a6bfdf;border-color:#cdd0e2">+2</div>
<div class="cell grn" style="left:0px;top:228px;width:54px;height:19px;background:#a6bfdf;border-color:#cdd0e2">57.05</div>
<div class="cell " style="left:54px;top:228px;width:54px;height:19px;background:#a6bfdf;border-color:#cdd0e2">30.69</div>
<div class="cell " style="left:108px;top:228px;width:54px;height:19px;background:#a6bfdf;border-color:#cdd0e2">-24.28</div>
<div class="cell " style="left:162px;top:228px;width:54px;height:19px;background:#a6bfdf;border-color:#cdd0e2">-4.15</div>
<div class="cell " style="left:216px;top:228px;width:54px;height:19px;background:#a6bfdf;border-color:#cdd0e2"></div>
<div class="cell " style="left:270px;top:228px;width:54px;height:19px;background:#a6bfdf;border-color:#cdd0e2"></div>
<div class="cell " style="left:324px;top:228px;width:54px;height:19px;background:#a6bfdf;border-color:#cdd0e2"></div>
<div class="cell " style="left:378px;top:228px;width:59px;height:19px;background:#a6bfdf;border-color:#cdd0e2"></div>
<div class="cell grn" style="left:0px;top:247px;width:54px;height:19px;background:#a6bfdf;border-color:#cdd0e2">52.10</div>
<div class="cell " style="left:54px;top:247px;width:54px;height:19px;background:#a6bfdf;border-color:#cdd0e2">31.04</div>
<div class="cell " style="left:108px;top:247px;width:54px;height:19px;background:#a6bfdf;border-color:#cdd0e2">-22.46</div>
<div class="cell " style="left:162px;top:247px;width:54px;height:19px;background:#a6bfdf;border-color:#cdd0e2">-4.02</div>
<div class="cell " style="left:216px;top:247px;width:54px;height:19px;background:#a6bfdf;border-color:#cdd0e2"></div>
<div class="cell " style="left:270px;top:247px;width:54px;height:19px;background:#a6bfdf;border-color:#cdd0e2"></div>
<div class="cell " style="left:324px;top:247px;width:54px;height:19px;background:#a6bfdf;border-color:#cdd0e2"></div>
<div class="cell " style="left:378px;top:247px;width:59px;height:19px;background:#a6bfdf;border-color:#cdd0e2"></div>
</div>
<div style="left:521px;top:614px;width:438px;height:288px;border:1px solid #9aa6bd;background:#fff"></div>
<div class="hd" style="left:522px;top:615px;width:52px;height:21px;">Mid</div>
<div class="hd" style="left:574px;top:615px;width:52px;height:21px;">IV</div>
<div class="hd" style="left:626px;top:615px;width:52px;height:21px;">Delta</div>
<div class="hd" style="left:678px;top:615px;width:52px;height:21px;">Theta</div>
<div class="hd" style="left:730px;top:615px;width:52px;height:21px;">OrigPr...</div>
<div class="hd" style="left:782px;top:615px;width:52px;height:21px;">IVChg</div>
<div class="hd" style="left:834px;top:615px;width:52px;height:21px;">Model</div>
<div class="hd" style="left:886px;top:615px;width:56px;height:21px;">Pos</div>
<div class="hd" style="left:942px;top:615px;width:17px;height:21px;"></div>
<div style="left:522px;top:636px;width:420px;height:265px;overflow:hidden">
<div class="cell grn" style="left:0px;top:0px;width:52px;height:19px;background:#a6bfdf;border-color:#cdd0e2">164.85</div>
<div class="cell " style="left:52px;top:0px;width:52px;height:19px;background:#a6bfdf;border-color:#cdd0e2">25.44</div>
<div class="cell " style="left:104px;top:0px;width:52px;height:19px;background:#a6bfdf;border-color:#cdd0e2">-54.01</div>
<div class="cell " style="left:156px;top:0px;width:52px;height:19px;background:#a6bfdf;border-color:#cdd0e2">-3.74</div>
<div class="cell " style="left:208px;top:0px;width:52px;height:19px;background:#a6bfdf;border-color:#cdd0e2"></div>
<div class="cell " style="left:260px;top:0px;width:52px;height:19px;background:#a6bfdf;border-color:#cdd0e2"></div>
<div class="cell " style="left:312px;top:0px;width:52px;height:19px;background:#a6bfdf;border-color:#cdd0e2"></div>
<div class="cell " style="left:364px;top:0px;width:56px;height:19px;background:#a6bfdf;border-color:#cdd0e2"></div>
<div class="cell grn" style="left:0px;top:19px;width:52px;height:19px;background:#a6bfdf;border-color:#cdd0e2">153.05</div>
<div class="cell " style="left:52px;top:19px;width:52px;height:19px;background:#a6bfdf;border-color:#cdd0e2">25.78</div>
<div class="cell " style="left:104px;top:19px;width:52px;height:19px;background:#a6bfdf;border-color:#cdd0e2">-51.16</div>
<div class="cell " style="left:156px;top:19px;width:52px;height:19px;background:#a6bfdf;border-color:#cdd0e2">-3.84</div>
<div class="cell " style="left:208px;top:19px;width:52px;height:19px;background:#a6bfdf;border-color:#cdd0e2"></div>
<div class="cell " style="left:260px;top:19px;width:52px;height:19px;background:#a6bfdf;border-color:#cdd0e2"></div>
<div class="cell " style="left:312px;top:19px;width:52px;height:19px;background:#a6bfdf;border-color:#cdd0e2"></div>
<div class="cell " style="left:364px;top:19px;width:56px;height:19px;background:#a6bfdf;border-color:#cdd0e2"></div>
<div class="cell grn" style="left:0px;top:38px;width:52px;height:19px;background:#a6bfdf;border-color:#cdd0e2">142.10</div>
<div class="cell " style="left:52px;top:38px;width:52px;height:19px;background:#a6bfdf;border-color:#cdd0e2">26.15</div>
<div class="cell " style="left:104px;top:38px;width:52px;height:19px;background:#a6bfdf;border-color:#cdd0e2">-48.37</div>
<div class="cell " style="left:156px;top:38px;width:52px;height:19px;background:#a6bfdf;border-color:#cdd0e2">-3.91</div>
<div class="cell " style="left:208px;top:38px;width:52px;height:19px;background:#a6bfdf;border-color:#cdd0e2"></div>
<div class="cell " style="left:260px;top:38px;width:52px;height:19px;background:#a6bfdf;border-color:#cdd0e2"></div>
<div class="cell " style="left:312px;top:38px;width:52px;height:19px;background:#a6bfdf;border-color:#cdd0e2"></div>
<div class="cell " style="left:364px;top:38px;width:56px;height:19px;background:#a6bfdf;border-color:#cdd0e2"></div>
<div class="cell grn" style="left:0px;top:57px;width:52px;height:19px;background:#a6bfdf;border-color:#cdd0e2">131.75</div>
<div class="cell " style="left:52px;top:57px;width:52px;height:19px;background:#a6bfdf;border-color:#cdd0e2">26.50</div>
<div class="cell " style="left:104px;top:57px;width:52px;height:19px;background:#a6bfdf;border-color:#cdd0e2">-45.65</div>
<div class="cell " style="left:156px;top:57px;width:52px;height:19px;background:#a6bfdf;border-color:#cdd0e2">-3.97</div>
<div class="cell " style="left:208px;top:57px;width:52px;height:19px;background:#a6bfdf;border-color:#cdd0e2"></div>
<div class="cell " style="left:260px;top:57px;width:52px;height:19px;background:#a6bfdf;border-color:#cdd0e2"></div>
<div class="cell " style="left:312px;top:57px;width:52px;height:19px;background:#a6bfdf;border-color:#cdd0e2"></div>
<div class="cell " style="left:364px;top:57px;width:56px;height:19px;background:#a6bfdf;border-color:#cdd0e2"></div>
<div class="cell grn" style="left:0px;top:76px;width:52px;height:19px;background:#a6bfdf;border-color:#cdd0e2">122.00</div>
<div class="cell " style="left:52px;top:76px;width:52px;height:19px;background:#a6bfdf;border-color:#cdd0e2">26.85</div>
<div class="cell " style="left:104px;top:76px;width:52px;height:19px;background:#a6bfdf;border-color:#cdd0e2">-43.01</div>
<div class="cell " style="left:156px;top:76px;width:52px;height:19px;background:#a6bfdf;border-color:#cdd0e2">-4.00</div>
<div class="cell " style="left:208px;top:76px;width:52px;height:19px;background:#a6bfdf;border-color:#cdd0e2"></div>
<div class="cell " style="left:260px;top:76px;width:52px;height:19px;background:#a6bfdf;border-color:#cdd0e2"></div>
<div class="cell " style="left:312px;top:76px;width:52px;height:19px;background:#a6bfdf;border-color:#cdd0e2"></div>
<div class="cell " style="left:364px;top:76px;width:56px;height:19px;background:#a6bfdf;border-color:#cdd0e2"></div>
<div class="cell grn" style="left:0px;top:95px;width:52px;height:19px;background:#a6bfdf;border-color:#cdd0e2">112.90</div>
<div class="cell " style="left:52px;top:95px;width:52px;height:19px;background:#a6bfdf;border-color:#cdd0e2">27.19</div>
<div class="cell " style="left:104px;top:95px;width:52px;height:19px;background:#a6bfdf;border-color:#cdd0e2">-40.45</div>
<div class="cell " style="left:156px;top:95px;width:52px;height:19px;background:#a6bfdf;border-color:#cdd0e2">-4.02</div>
<div class="cell " style="left:208px;top:95px;width:52px;height:19px;background:#a6bfdf;border-color:#cdd0e2"></div>
<div class="cell " style="left:260px;top:95px;width:52px;height:19px;background:#a6bfdf;border-color:#cdd0e2"></div>
<div class="cell " style="left:312px;top:95px;width:52px;height:19px;background:#a6bfdf;border-color:#cdd0e2"></div>
<div class="cell " style="left:364px;top:95px;width:56px;height:19px;background:#a6bfdf;border-color:#cdd0e2"></div>
<div class="cell grn" style="left:0px;top:114px;width:52px;height:19px;background:#a6bfdf;border-color:#cdd0e2">104.40</div>
<div class="cell " style="left:52px;top:114px;width:52px;height:19px;background:#a6bfdf;border-color:#cdd0e2">27.54</div>
<div class="cell " style="left:104px;top:114px;width:52px;height:19px;background:#a6bfdf;border-color:#cdd0e2">-37.99</div>
<div class="cell " style="left:156px;top:114px;width:52px;height:19px;background:#a6bfdf;border-color:#cdd0e2">-4.01</div>
<div class="cell " style="left:208px;top:114px;width:52px;height:19px;background:#a6bfdf;border-color:#cdd0e2"></div>
<div class="cell " style="left:260px;top:114px;width:52px;height:19px;background:#a6bfdf;border-color:#cdd0e2"></div>
<div class="cell " style="left:312px;top:114px;width:52px;height:19px;background:#a6bfdf;border-color:#cdd0e2"></div>
<div class="cell " style="left:364px;top:114px;width:56px;height:19px;background:#a6bfdf;border-color:#cdd0e2"></div>
<div class="cell grn" style="left:0px;top:133px;width:52px;height:19px;background:#a6bfdf;border-color:#cdd0e2">96.30</div>
<div class="cell " style="left:52px;top:133px;width:52px;height:19px;background:#a6bfdf;border-color:#cdd0e2">27.86</div>
<div class="cell " style="left:104px;top:133px;width:52px;height:19px;background:#a6bfdf;border-color:#cdd0e2">-35.61</div>
<div class="cell " style="left:156px;top:133px;width:52px;height:19px;background:#a6bfdf;border-color:#cdd0e2">-3.99</div>
<div class="cell " style="left:208px;top:133px;width:52px;height:19px;background:#a6bfdf;border-color:#cdd0e2"></div>
<div class="cell " style="left:260px;top:133px;width:52px;height:19px;background:#a6bfdf;border-color:#cdd0e2"></div>
<div class="cell " style="left:312px;top:133px;width:52px;height:19px;background:#a6bfdf;border-color:#cdd0e2"></div>
<div class="cell " style="left:364px;top:133px;width:56px;height:19px;background:#a6bfdf;border-color:#cdd0e2"></div>
<div class="cell grn" style="left:0px;top:152px;width:52px;height:19px;background:#a6bfdf;border-color:#cdd0e2">88.90</div>
<div class="cell " style="left:52px;top:152px;width:52px;height:19px;background:#a6bfdf;border-color:#cdd0e2">28.21</div>
<div class="cell " style="left:104px;top:152px;width:52px;height:19px;background:#a6bfdf;border-color:#cdd0e2">-33.35</div>
<div class="cell " style="left:156px;top:152px;width:52px;height:19px;background:#a6bfdf;border-color:#cdd0e2">-3.95</div>
<div class="cell " style="left:208px;top:152px;width:52px;height:19px;background:#a6bfdf;border-color:#cdd0e2"></div>
<div class="cell " style="left:260px;top:152px;width:52px;height:19px;background:#a6bfdf;border-color:#cdd0e2"></div>
<div class="cell " style="left:312px;top:152px;width:52px;height:19px;background:#a6bfdf;border-color:#cdd0e2"></div>
<div class="cell " style="left:364px;top:152px;width:56px;height:19px;background:#a6bfdf;border-color:#cdd0e2"></div>
<div class="cell grn" style="left:0px;top:171px;width:52px;height:19px;background:#a6bfdf;border-color:#cdd0e2">81.90</div>
<div class="cell " style="left:52px;top:171px;width:52px;height:19px;background:#a6bfdf;border-color:#cdd0e2">28.53</div>
<div class="cell " style="left:104px;top:171px;width:52px;height:19px;background:#a6bfdf;border-color:#cdd0e2">-31.17</div>
<div class="cell " style="left:156px;top:171px;width:52px;height:19px;background:#a6bfdf;border-color:#cdd0e2">-3.90</div>
<div class="cell " style="left:208px;top:171px;width:52px;height:19px;background:#a6bfdf;border-color:#cdd0e2"></div>
<div class="cell " style="left:260px;top:171px;width:52px;height:19px;background:#a6bfdf;border-color:#cdd0e2"></div>
<div class="cell " style="left:312px;top:171px;width:52px;height:19px;background:#a6bfdf;border-color:#cdd0e2"></div>
<div class="cell " style="left:364px;top:171px;width:56px;height:19px;background:#a6bfdf;border-color:#cdd0e2"></div>
<div class="cell grn" style="left:0px;top:190px;width:52px;height:19px;background:#a6bfdf;border-color:#cdd0e2">75.50</div>
<div class="cell " style="left:52px;top:190px;width:52px;height:19px;background:#a6bfdf;border-color:#cdd0e2">28.87</div>
<div class="cell " style="left:104px;top:190px;width:52px;height:19px;background:#a6bfdf;border-color:#cdd0e2">-29.11</div>
<div class="cell " style="left:156px;top:190px;width:52px;height:19px;background:#a6bfdf;border-color:#cdd0e2">-3.84</div>
<div class="cell " style="left:208px;top:190px;width:52px;height:19px;background:#a6bfdf;border-color:#cdd0e2"></div>
<div class="cell " style="left:260px;top:190px;width:52px;height:19px;background:#a6bfdf;border-color:#cdd0e2"></div>
<div class="cell " style="left:312px;top:190px;width:52px;height:19px;background:#a6bfdf;border-color:#cdd0e2"></div>
<div class="cell " style="left:364px;top:190px;width:56px;height:19px;background:#a6bfdf;border-color:#cdd0e2"></div>
<div class="cell grn" style="left:0px;top:209px;width:52px;height:19px;background:#a6bfdf;border-color:#cdd0e2">69.50</div>
<div class="cell " style="left:52px;top:209px;width:52px;height:19px;background:#a6bfdf;border-color:#cdd0e2">29.21</div>
<div class="cell " style="left:104px;top:209px;width:52px;height:19px;background:#a6bfdf;border-color:#cdd0e2">-27.14</div>
<div class="cell " style="left:156px;top:209px;width:52px;height:19px;background:#a6bfdf;border-color:#cdd0e2">-3.76</div>
<div class="cell " style="left:208px;top:209px;width:52px;height:19px;background:#a6bfdf;border-color:#cdd0e2"></div>
<div class="cell " style="left:260px;top:209px;width:52px;height:19px;background:#a6bfdf;border-color:#cdd0e2"></div>
<div class="cell " style="left:312px;top:209px;width:52px;height:19px;background:#a6bfdf;border-color:#cdd0e2"></div>
<div class="cell " style="left:364px;top:209px;width:56px;height:19px;background:#a6bfdf;border-color:#cdd0e2"></div>
<div class="cell grn" style="left:0px;top:228px;width:52px;height:19px;background:#a6bfdf;border-color:#cdd0e2">64.00</div>
<div class="cell " style="left:52px;top:228px;width:52px;height:19px;background:#a6bfdf;border-color:#cdd0e2">29.55</div>
<div class="cell " style="left:104px;top:228px;width:52px;height:19px;background:#a6bfdf;border-color:#cdd0e2">-25.29</div>
<div class="cell " style="left:156px;top:228px;width:52px;height:19px;background:#a6bfdf;border-color:#cdd0e2">-3.68</div>
<div class="cell " style="left:208px;top:228px;width:52px;height:19px;background:#a6bfdf;border-color:#cdd0e2"></div>
<div class="cell " style="left:260px;top:228px;width:52px;height:19px;background:#a6bfdf;border-color:#cdd0e2"></div>
<div class="cell " style="left:312px;top:228px;width:52px;height:19px;background:#a6bfdf;border-color:#cdd0e2"></div>
<div class="cell " style="left:364px;top:228px;width:56px;height:19px;background:#a6bfdf;border-color:#cdd0e2"></div>
<div class="cell grn" style="left:0px;top:247px;width:52px;height:19px;background:#a6bfdf;border-color:#cdd0e2">58.90</div>
<div class="cell " style="left:52px;top:247px;width:52px;height:19px;background:#a6bfdf;border-color:#cdd0e2">29.90</div>
<div class="cell " style="left:104px;top:247px;width:52px;height:19px;background:#a6bfdf;border-color:#cdd0e2">-23.53</div>
<div class="cell " style="left:156px;top:247px;width:52px;height:19px;background:#a6bfdf;border-color:#cdd0e2">-3.59</div>
<div class="cell " style="left:208px;top:247px;width:52px;height:19px;background:#a6bfdf;border-color:#cdd0e2"></div>
<div class="cell " style="left:260px;top:247px;width:52px;height:19px;background:#a6bfdf;border-color:#cdd0e2"></div>
<div class="cell " style="left:312px;top:247px;width:52px;height:19px;background:#a6bfdf;border-color:#cdd0e2"></div>
<div class="cell " style="left:364px;top:247px;width:56px;height:19px;background:#a6bfdf;border-color:#cdd0e2"></div>
</div>
<div style="left:941px;top:636px;width:17px;height:265px;background:#d3d8e6"></div>
<svg style="left:945px;top:641px" width="9" height="5"><path d="M0 5 L4.5 0 L9 5Z" fill="#6e7c9a"/></svg>
<svg style="left:945px;top:891px" width="9" height="5"><path d="M0 0 H9 L4.5 5Z" fill="#6e7c9a"/></svg>
<div style="left:945px;top:746px;width:9px;height:18px;background:#8e9ab4"></div>
<div class="t" style="left:20px;top:918.5px;">Trade Analysis</div>
<div class="combo" style="left:105px;top:917px;width:150px;height:19px;line-height:18.4px">Combined</div>
<div class="combo" style="left:263px;top:917px;width:80px;height:19px;line-height:18.4px">Auto</div>
<div style="left:817px;top:919px;width:13px;height:13px;background:#fff;border:1px solid #a3adc4"></div>
<div class="t" style="left:834px;top:918px;letter-spacing:.3px">Ignore Today's Trades</div>
<div style="left:13px;top:939px;width:948px;height:61px;border:1px solid #9aa6bd;background:#fff"></div>
<div class="hd" style="left:14px;top:940px;width:72px;height:21px;line-height:21px;">Analysis</div>
<div class="hd" style="left:86px;top:940px;width:72px;height:21px;line-height:21px;">Margin</div>
<div class="hd" style="left:158px;top:940px;width:72px;height:21px;line-height:21px;">Cost</div>
<div class="hd" style="left:230px;top:940px;width:72px;height:21px;line-height:21px;">Curr Cost</div>
<div class="hd" style="left:302px;top:940px;width:72px;height:21px;line-height:21px;">Commission</div>
<div class="hd" style="left:374px;top:940px;width:72px;height:21px;line-height:21px;">PnL</div>
<div class="hd" style="left:446px;top:940px;width:72px;height:21px;line-height:21px;">PnL%</div>
<div class="hd" style="left:518px;top:940px;width:72px;height:21px;line-height:21px;">Delta</div>
<div class="hd" style="left:590px;top:940px;width:72px;height:21px;line-height:21px;">Gamma</div>
<div class="hd" style="left:662px;top:940px;width:72px;height:21px;line-height:21px;">Theta</div>
<div class="hd" style="left:734px;top:940px;width:72px;height:21px;line-height:21px;">Vega</div>
<div class="hd" style="left:806px;top:940px;width:72px;height:21px;line-height:21px;">T/D</div>
<div class="hd" style="left:878px;top:940px;width:82px;height:21px;line-height:21px;">Plot</div>
<div class="cell " style="left:14px;top:961px;width:72px;height:19px;line-height:20.4px;"><svg width="9" height="9" style="position:absolute;left:2px;top:5px"><rect x=".5" y=".5" width="8" height="8" fill="#fff" stroke="#555"/><path d="M2 4.5 h5 M4.5 2 v5" stroke="#555"/></svg><span style="color:#1a7ae0;position:absolute;left:17.5px">Position</span></div>
<div class="cell " style="left:86px;top:961px;width:72px;height:19px;line-height:20.4px;">23,525.60</div>
<div class="cell " style="left:158px;top:961px;width:72px;height:19px;line-height:20.4px;">-838.00</div>
<div class="cell " style="left:230px;top:961px;width:72px;height:19px;line-height:20.4px;">-860.00</div>
<div class="cell " style="left:302px;top:961px;width:72px;height:19px;line-height:20.4px;">28.00</div>
<div class="cell red" style="left:374px;top:961px;width:72px;height:19px;line-height:20.4px;">-1,698.00</div>
<div class="cell red" style="left:446px;top:961px;width:72px;height:19px;line-height:20.4px;">-7.22%</div>
<div class="cell " style="left:518px;top:961px;width:72px;height:19px;line-height:20.4px;">7.29</div>
<div class="cell " style="left:590px;top:961px;width:72px;height:19px;line-height:20.4px;">-0.04</div>
<div class="cell " style="left:662px;top:961px;width:72px;height:19px;line-height:20.4px;">139.13</div>
<div class="cell " style="left:734px;top:961px;width:72px;height:19px;line-height:20.4px;">-161.38</div>
<div class="cell " style="left:806px;top:961px;width:72px;height:19px;line-height:20.4px;">19.1</div>
<div class="cell cc" style="left:878px;top:961px;width:82px;height:19px;border-right:none;line-height:20.4px;"><svg width="13" height="13" style="position:static;vertical-align:-2px"><rect x=".5" y=".5" width="12" height="12" fill="#fff" stroke="#a3adc4"/><path d="M3 6.5 L5.5 9.5 L10 3" stroke="#555f78" stroke-width="1.4" fill="none"/></svg></div>
<div class="cell " style="left:14px;top:980px;width:72px;height:19px;line-height:20.4px;"><svg width="9" height="9" style="position:absolute;left:2px;top:5px"><rect x=".5" y=".5" width="8" height="8" fill="#fff" stroke="#c4c4c4"/><path d="M2 4.5 h5 M4.5 2 v5" stroke="#c4c4c4"/></svg><span style="color:#008000;position:absolute;left:17.5px">Model</span></div>
<div class="cell " style="left:86px;top:980px;width:72px;height:19px;line-height:20.4px;"></div>
<div class="cell " style="left:158px;top:980px;width:72px;height:19px;line-height:20.4px;"></div>
<div class="cell " style="left:230px;top:980px;width:72px;height:19px;line-height:20.4px;"></div>
<div class="cell " style="left:302px;top:980px;width:72px;height:19px;line-height:20.4px;"></div>
<div class="cell " style="left:374px;top:980px;width:72px;height:19px;line-height:20.4px;"></div>
<div class="cell " style="left:446px;top:980px;width:72px;height:19px;line-height:20.4px;"></div>
<div class="cell " style="left:518px;top:980px;width:72px;height:19px;line-height:20.4px;">0.00</div>
<div class="cell " style="left:590px;top:980px;width:72px;height:19px;line-height:20.4px;">0.00</div>
<div class="cell " style="left:662px;top:980px;width:72px;height:19px;line-height:20.4px;">0.00</div>
<div class="cell " style="left:734px;top:980px;width:72px;height:19px;line-height:20.4px;">0.00</div>
<div class="cell " style="left:806px;top:980px;width:72px;height:19px;line-height:20.4px;">0</div>
<div class="cell cc" style="left:878px;top:980px;width:82px;height:19px;border-right:none;line-height:20.4px;"><svg width="13" height="13" style="position:static;vertical-align:-2px"><rect x=".5" y=".5" width="12" height="12" fill="#fff" stroke="#a3adc4"/><path d="M3 6.5 L5.5 9.5 L10 3" stroke="#555f78" stroke-width="1.4" fill="none"/></svg></div>
<div style="left:973px;top:165px;width:934px;height:836px;border:1px solid #a9b3c9;border-bottom:none"></div>
<div style="left:973px;top:191px;width:932px;height:810px;border:1px solid #a9b3c9;border-bottom:none"></div>
<div style="left:973px;top:165px;width:77px;height:27px;border:1px solid #a9b3c9;border-bottom:none;background:#d6dbe9"></div>
<div class="t c" style="left:861.5px;width:300px;top:170px;">Risk Chart</div>
<div style="left:1049px;top:166px;width:81px;height:25px;border:1px solid #a9b3c9;border-bottom:none;background:#ccd2e3"></div>
<div class="t c" style="left:939.5px;width:300px;top:170px;">Price Chart</div>
<div style="left:1131px;top:166px;width:124px;height:25px;border:1px solid #a9b3c9;border-bottom:none;background:#ccd2e3"></div>
<div class="t c" style="left:1043.0px;width:300px;top:170px;">Movement Analysis</div>
<div style="left:1256px;top:166px;width:66px;height:25px;border:1px solid #a9b3c9;border-bottom:none;background:#ccd2e3"></div>
<div class="t c" style="left:1139.0px;width:300px;top:170px;">Volatility</div>
<div style="left:1323px;top:166px;width:160px;height:25px;border:1px solid #a9b3c9;border-bottom:none;background:#ccd2e3"></div>
<div class="t c" style="left:1253.0px;width:300px;top:170px;">Statistics &amp; Fundamentals</div>
<div class="t" style="left:980px;top:196.5px;letter-spacing:.35px">Vol Adjust</div>
<div style="left:1041px;top:194px;width:53px;height:20px;background:#fff;border:1px solid #a3adc4"></div>
<div class="t r" style="left:773px;width:300px;top:196.5px;color:#000;font-size:12.5px">-1</div>
<svg style="left:1082px;top:198px" width="8" height="13"><path d="M0.5 4.5 L4 1 L7.5 4.5Z M0.5 8.5 H7.5 L4 12Z" fill="#5d6b88"/></svg>
<div class="t" style="left:1658px;top:196.5px;">Projection</div>
<div style="left:1718px;top:194px;width:180px;height:20px;background:#fff;border:1px solid #a3adc4"></div>
<div class="t" style="left:1721px;top:196.5px;font-size:12.5px;letter-spacing:.35px">27/03/2026</div>
<div class="t" style="left:1814px;top:196.5px;font-size:12.5px">T+0</div>
<div class="t" style="left:1843px;top:196.5px;font-size:12.5px">5Ln</div>
<svg style="left:1796px;top:202px" width="8" height="5"><path d="M0 0 H8 L4 4.5Z" fill="#7a849e"/></svg>
<svg style="left:1871px;top:200px" width="5" height="9"><path d="M5 0 V9 L0 4.5Z" fill="#1e2a4a"/></svg>
<svg style="left:1887px;top:200px" width="5" height="9"><path d="M0 0 V9 L5 4.5Z" fill="#1e2a4a"/></svg>
<div style="left:974px;top:217px;width:930px;height:757px;background:#fff"></div>
<div style="left:974px;top:974px;width:930px;height:25px;background:#293955"></div>
<div class="t r" style="left:1458px;width:300px;top:978.5px;color:#fff;font-size:13px">420%</div>
<div style="left:1767px;top:986px;width:8px;height:1px;background:#cfd4e0"></div>
<div style="left:1782px;top:986px;width:85px;height:1px;background:#f3e6a8"></div>
<div style="left:1869px;top:986px;width:10px;height:1px;background:#cfd4e0"></div>
<div style="left:1830px;top:983px;width:1px;height:7px;background:#eeeadb"></div>
<div style="left:1866px;top:982px;width:3px;height:9px;background:#f8e9a0"></div>
<svg style="left:1885px;top:982px" width="9" height="9"><path d="M4.5 1 V8 M1 4.5 H8" stroke="#e8ebf2" stroke-width="1"/></svg>
<svg style="left:0;top:0" width="1915" height="1001" font-family="Liberation Sans" font-size="10.8">
<rect x="1296.5" y="235.5" width="498.7" height="529.0" fill="#92cddc"/>
<rect x="1421.2" y="235.5" width="249.4" height="529.0" fill="#4f81bd"/>
<path d="M1025.5 235.5 H1853.5 M1025.5 264.5 H1853.5 M1025.5 294.5 H1853.5 M1025.5 323.5 H1853.5 M1025.5 353.5 H1853.5 M1025.5 382.5 H1853.5 M1025.5 411.5 H1853.5 M1025.5 441.5 H1853.5 M1025.5 470.5 H1853.5 M1025.5 500.5 H1853.5 M1025.5 529.5 H1853.5 M1025.5 558.5 H1853.5 M1025.5 588.5 H1853.5 M1025.5 617.5 H1853.5 M1025.5 646.5 H1853.5 M1025.5 676.5 H1853.5 M1025.5 705.5 H1853.5 M1025.5 735.5 H1853.5 M1025.5 764.5 H1853.5 M1048.5 235.5 V768.5 M1138.5 235.5 V768.5 M1227.5 235.5 V768.5 M1317.5 235.5 V768.5 M1407.5 235.5 V768.5 M1497.5 235.5 V768.5 M1586.5 235.5 V768.5 M1676.5 235.5 V768.5 M1766.5 235.5 V768.5 M1029.5 235.5 V764.5 M1849.5 235.5 V764.5" stroke="#d9d9d9" stroke-width="1" fill="none"/>
<text x="1022" y="239.9" text-anchor="end" fill="#222">85%</text>
<text x="1857" y="239.9" fill="#222">20,000</text>
<text x="1022" y="269.3" text-anchor="end" fill="#222">77%</text>
<text x="1857" y="269.3" fill="#222">18,000</text>
<text x="1022" y="298.7" text-anchor="end" fill="#222">68%</text>
<text x="1857" y="298.7" fill="#222">16,000</text>
<text x="1022" y="328.1" text-anchor="end" fill="#222">60%</text>
<text x="1857" y="328.1" fill="#222">14,000</text>
<text x="1022" y="357.5" text-anchor="end" fill="#222">51%</text>
<text x="1857" y="357.5" fill="#222">12,000</text>
<text x="1022" y="386.8" text-anchor="end" fill="#222">43%</text>
<text x="1857" y="386.8" fill="#222">10,000</text>
<text x="1022" y="416.2" text-anchor="end" fill="#222">34%</text>
<text x="1857" y="416.2" fill="#222">8,000</text>
<text x="1022" y="445.6" text-anchor="end" fill="#222">26%</text>
<text x="1857" y="445.6" fill="#222">6,000</text>
<text x="1022" y="475.0" text-anchor="end" fill="#222">17%</text>
<text x="1857" y="475.0" fill="#222">4,000</text>
<text x="1022" y="504.4" text-anchor="end" fill="#222">9%</text>
<text x="1857" y="504.4" fill="#222">2,000</text>
<text x="1022" y="533.8" text-anchor="end" fill="#222">0%</text>
<text x="1857" y="533.8" fill="#222">0</text>
<text x="1022" y="563.2" text-anchor="end" fill="#222">-9%</text>
<text x="1857" y="563.2" fill="#222">-2,000</text>
<text x="1022" y="592.6" text-anchor="end" fill="#222">-17%</text>
<text x="1857" y="592.6" fill="#222">-4,000</text>
<text x="1022" y="622.0" text-anchor="end" fill="#222">-26%</text>
<text x="1857" y="622.0" fill="#222">-6,000</text>
<text x="1022" y="651.3" text-anchor="end" fill="#222">-34%</text>
<text x="1857" y="651.3" fill="#222">-8,000</text>
<text x="1022" y="680.7" text-anchor="end" fill="#222">-43%</text>
<text x="1857" y="680.7" fill="#222">-10,000</text>
<text x="1022" y="710.1" text-anchor="end" fill="#222">-51%</text>
<text x="1857" y="710.1" fill="#222">-12,000</text>
<text x="1022" y="739.5" text-anchor="end" fill="#222">-60%</text>
<text x="1857" y="739.5" fill="#222">-14,000</text>
<text x="1022" y="768.9" text-anchor="end" fill="#222">-68%</text>
<text x="1857" y="768.9" fill="#222">-16,000</text>
<text x="1049.2" y="781" text-anchor="middle" fill="#222">6200</text>
<text x="1138.9" y="781" text-anchor="middle" fill="#222">6250</text>
<text x="1228.7" y="781" text-anchor="middle" fill="#222">6300</text>
<text x="1318.4" y="781" text-anchor="middle" fill="#222">6350</text>
<text x="1408.1" y="781" text-anchor="middle" fill="#222">6400</text>
<text x="1497.8" y="781" text-anchor="middle" fill="#222">6450</text>
<text x="1587.5" y="781" text-anchor="middle" fill="#222">6500</text>
<text x="1677.3" y="781" text-anchor="middle" fill="#222">6550</text>
<text x="1767.0" y="781" text-anchor="middle" fill="#222">6600</text>
<text x="1048.5" y="228.7" text-anchor="middle" fill="#222">-4.3%</text>
<text x="1138.2" y="228.7" text-anchor="middle" fill="#222">-3.5%</text>
<text x="1228.0" y="228.7" text-anchor="middle" fill="#222">-2.7%</text>
<text x="1317.7" y="228.7" text-anchor="middle" fill="#222">-2.0%</text>
<text x="1407.4" y="228.7" text-anchor="middle" fill="#222">-1.2%</text>
<text x="1497.1" y="228.7" text-anchor="middle" fill="#222">-0.4%</text>
<text x="1586.8" y="228.7" text-anchor="middle" fill="#222">0.4%</text>
<text x="1676.6" y="228.7" text-anchor="middle" fill="#222">1.1%</text>
<text x="1766.3" y="228.7" text-anchor="middle" fill="#222">1.9%</text>
<rect x="1423.5" y="218.5" width="33" height="12" fill="#f2f5fb" stroke="#1e2a4a" stroke-width="1"/><text x="1440" y="228.7" text-anchor="middle" fill="#222">-0.9%</text>
<path d="M1029.5 529.5 H1853.5" stroke="#000" stroke-width="1"/>
<path d="M1029.6 606.5 C1041.3 599.8 1076.8 578.9 1100.0 566.0 C1123.2 553.1 1147.3 539.7 1169.0 529.0 C1190.7 518.3 1208.8 510.0 1230.0 502.0 C1251.2 494.0 1276.8 486.0 1296.0 481.0 C1315.2 476.0 1329.6 474.2 1345.0 472.0 C1360.4 469.8 1372.8 468.1 1388.6 467.5 C1404.4 466.9 1421.7 467.2 1440.0 468.5 C1458.3 469.8 1474.1 471.2 1498.6 475.0 C1523.1 478.8 1557.3 485.3 1587.0 491.0 C1616.7 496.7 1646.8 503.6 1676.6 509.0 C1706.4 514.4 1737.3 519.4 1766.0 523.4 C1794.7 527.4 1835.2 531.4 1849.0 533.0" stroke="#ff80ff" stroke-width="1.1" fill="none"/>
<path d="M1029.6 589.6 C1041.3 586.3 1076.8 576.1 1100.0 570.0 C1123.2 563.9 1147.3 557.8 1169.0 552.7 C1190.7 547.6 1210.7 543.5 1230.0 539.5 C1249.3 535.5 1263.0 532.4 1284.7 529.0 C1306.4 525.6 1334.1 521.5 1360.0 519.0 C1385.9 516.5 1414.5 515.1 1440.0 514.0 C1465.5 512.9 1488.5 512.3 1513.0 512.2 C1537.5 512.1 1559.7 512.4 1587.0 513.2 C1614.3 514.0 1646.8 515.5 1676.6 516.9 C1706.4 518.3 1737.3 520.0 1766.0 521.6 C1794.7 523.2 1835.2 525.7 1849.0 526.5" stroke="#a0a030" stroke-width="1.1" fill="none"/>
<path d="M1029.6 590.0 C1041.3 587.8 1076.8 580.8 1100.0 576.5 C1123.2 572.2 1136.3 569.1 1169.0 564.0 C1201.7 558.9 1250.8 551.1 1296.0 546.0 C1341.2 540.9 1400.2 536.2 1440.0 533.5 C1479.8 530.8 1505.0 530.5 1535.0 529.7 C1565.0 528.9 1592.5 528.7 1620.0 528.5 C1647.5 528.3 1673.3 528.4 1700.0 528.4 C1726.7 528.4 1755.2 528.6 1780.0 528.8 C1804.8 528.9 1837.5 529.2 1849.0 529.3" stroke="#808080" stroke-width="1.1" fill="none"/>
<path d="M1029.6 591.0 C1041.3 589.3 1076.8 584.3 1100.0 581.0 C1123.2 577.7 1136.3 575.6 1169.0 571.4 C1201.7 567.2 1250.8 560.3 1296.0 555.8 C1341.2 551.3 1399.1 547.0 1440.0 544.3 C1480.9 541.6 1517.0 540.7 1541.5 539.7 C1566.0 538.7 1564.4 539.0 1587.0 538.4 C1609.6 537.8 1647.2 536.9 1677.0 536.4 C1706.8 535.9 1737.3 535.5 1766.0 535.3 C1794.7 535.1 1835.2 535.0 1849.0 535.0" stroke="#ff4040" stroke-width="1.1" fill="none"/>
<path d="M1029.6 591.7 C1041.3 590.2 1076.8 585.8 1100.0 583.0 C1123.2 580.2 1139.1 578.0 1169.0 574.8 C1198.9 571.6 1261.1 565.5 1279.5 563.6" stroke="#ff4040" stroke-width="1.1" fill="none"/>
<path d="M1279.5 563.6 C1282.2 563.3 1269.2 563.6 1296.0 562.0 C1322.8 560.4 1405.3 556.2 1440.0 554.0 C1474.7 551.8 1479.5 550.1 1504.0 548.6 C1528.5 547.1 1558.2 545.8 1587.0 544.7 C1615.8 543.7 1647.2 542.8 1677.0 542.3 C1706.8 541.8 1737.3 541.6 1766.0 541.4 C1794.7 541.2 1835.2 541.1 1849.0 541.0" stroke="#6a96f0" stroke-width="1.1" fill="none"/>
<polyline points="1029.5,725.7 1048.5,725.7 1317.7,284.9 1362.5,248.1 1542.0,542.0 1849.5,542.0" stroke="#3c3cc8" stroke-width="2" fill="none" stroke-linejoin="round"/>
<polygon points="1427.5,549.5 1504,543.4 1504,552 1427.5,558" fill="#cf9a9c" opacity=".8"/>
<circle cx="1440" cy="554.5" r="4.6" fill="#ff0000" stroke="#000" stroke-width="1"/>
<path d="M1169.0 240 V765 M1534.1 240 V765" stroke="#990099" stroke-width="1" stroke-dasharray="5 4" fill="none"/>
<text transform="translate(1167.5,762) rotate(-90)" fill="#990099">6267.16</text>
<text transform="translate(1532.6,762) rotate(-90)" fill="#990099">6470.62</text>
<text transform="translate(1308.5,278) rotate(-90)" fill="#5b9bd5">6338.21</text>
<text transform="translate(1433.2,278) rotate(-90)" fill="#8db4e2">6407.68</text>
<text transform="translate(1668.5,278) rotate(-90)" fill="#8db4e2">6546.64</text>
<text transform="translate(1793.2,278) rotate(-90)" fill="#5b9bd5">6616.12</text>
<rect x="980" y="547" width="45" height="14" fill="#cc0000"/><text x="1022" y="558.5" text-anchor="end" fill="#fff">-7%</text>
<rect x="1854" y="547" width="47" height="14" fill="#cc0000"/><text x="1857" y="558.5" fill="#fff">-1,698</text>
<g font-size="11.2">
<rect x="1034.5" y="240.5" width="165" height="83.5" rx="5" fill="#edf2fa" fill-opacity=".85" stroke="#7f8ba6" stroke-width="1"/>
<rect x="1042" y="248" width="3.5" height="13" fill="#ff3030"/>
<text x="1046" y="259" fill="#666" xml:space="preserve">-5,407.83 Realized PnL</text>
<rect x="1042" y="262" width="3.5" height="13" fill="#7aa0e8"/>
<text x="1046" y="273" fill="#555">+2</text><text x="1063" y="273" fill="#4a4ae8" xml:space="preserve">10abr. 6200 Put &#916;   -26.20</text>
<rect x="1042" y="276" width="3.5" height="13" fill="#7aa0e8"/>
<text x="1046" y="287" fill="#555">+2</text><text x="1063" y="287" fill="#4a4ae8" xml:space="preserve">10abr. 6475 Put &#916;   -54.65</text>
<rect x="1042" y="290" width="3.5" height="13" fill="#7aa0e8"/>
<text x="1046" y="301" fill="#555">-1</text><text x="1060" y="301" fill="#f04848" xml:space="preserve">10abr. 6350 Put &#916;   -40.23</text>
<rect x="1042" y="304" width="3.5" height="13" fill="#7aa0e8"/>
<text x="1046" y="315" fill="#555">-3</text><text x="1060" y="315" fill="#f04848" xml:space="preserve">10abr. 6375 Put &#916;   -42.94</text>
<rect x="1034.5" y="661.5" width="115" height="98" rx="5" fill="#edf2fa" fill-opacity=".8" stroke="#7f8ba6" stroke-width="1"/>
<text x="1042" y="680" fill="#7a7ad8" font-size="11">10/04/2026 (0)</text>
<text x="1042" y="694" fill="#ff98f8" font-size="11">08/04/2026 (2) T+12</text>
<text x="1042" y="708" fill="#b4b458" font-size="11">05/04/2026 (5) T+9</text>
<text x="1042" y="722" fill="#a0a0a0" font-size="11">02/04/2026 (8) T+6</text>
<text x="1042" y="736" fill="#ff7070" font-size="11">30/03/2026 (11) T+3</text>
<text x="1042" y="750" fill="#98b8f4" font-size="11">27/03/2026 (14) T+0</text>
</g>
<text x="1098" y="756" text-anchor="middle" fill="#880088">31.0%</text>
<text x="1351" y="756" text-anchor="middle" fill="#880088">25.4%</text>
<text x="1691" y="756" text-anchor="middle" fill="#880088">43.6%</text>
<rect x="978.5" y="785.5" width="921" height="183.5" rx="5" fill="#e9eff8" stroke="#3f4b66" stroke-width="1"/>
<rect x="1030.0" y="813.4" width="64.6" height="10.0" fill="#f4777a" stroke="#555a66" stroke-width=".8"/>
<rect x="1094.6" y="813.4" width="89.7" height="8.0" fill="#f4777a" stroke="#555a66" stroke-width=".8"/>
<rect x="1184.3" y="813.4" width="90.2" height="7.0" fill="#f4777a" stroke="#555a66" stroke-width=".8"/>
<rect x="1274.5" y="813.4" width="89.0" height="5.2" fill="#f4777a" stroke="#555a66" stroke-width=".8"/>
<rect x="1363.5" y="813.4" width="89.5" height="4.0" fill="#f4777a" stroke="#555a66" stroke-width=".8"/>
<rect x="1453.0" y="813.4" width="90.5" height="2.8" fill="#f4777a" stroke="#555a66" stroke-width=".8"/>
<rect x="1543.5" y="813.4" width="89.0" height="2.6" fill="#f4777a" stroke="#555a66" stroke-width=".8"/>
<rect x="1632.5" y="813.4" width="90.0" height="2.2" fill="#f4777a" stroke="#555a66" stroke-width=".8"/>
<rect x="1722.5" y="813.4" width="128.5" height="2.2" fill="#f4777a" stroke="#555a66" stroke-width=".8"/>
<text x="1049.2" y="801.8" text-anchor="middle" fill="#f05860">-17%</text>
<text x="1138.9" y="801.8" text-anchor="middle" fill="#f05860">-14%</text>
<text x="1228.7" y="801.8" text-anchor="middle" fill="#f05860">-11%</text>
<text x="1318.4" y="801.8" text-anchor="middle" fill="#f05860">-9%</text>
<text x="1408.1" y="801.8" text-anchor="middle" fill="#f05860">-7%</text>
<text x="1497.8" y="801.8" text-anchor="middle" fill="#f05860">-6%</text>
<text x="1587.5" y="801.8" text-anchor="middle" fill="#f05860">-5%</text>
<text x="1677.3" y="801.8" text-anchor="middle" fill="#f05860">-4%</text>
<text x="1767.0" y="801.8" text-anchor="middle" fill="#f05860">-3%</text>
<text x="1049.2" y="813" text-anchor="middle" fill="#f05860">-4080</text>
<text x="1138.9" y="813" text-anchor="middle" fill="#f05860">-3337</text>
<text x="1228.7" y="813" text-anchor="middle" fill="#f05860">-2685</text>
<text x="1318.4" y="813" text-anchor="middle" fill="#f05860">-2132</text>
<text x="1408.1" y="813" text-anchor="middle" fill="#f05860">-1682</text>
<text x="1497.8" y="813" text-anchor="middle" fill="#f05860">-1330</text>
<text x="1587.5" y="813" text-anchor="middle" fill="#f05860">-1068</text>
<text x="1677.3" y="813" text-anchor="middle" fill="#f05860">-885</text>
<text x="1767.0" y="813" text-anchor="middle" fill="#f05860">-766</text>
<rect x="1030.0" y="845.2" width="64.6" height="10.0" fill="#5278f4" stroke="#555a66" stroke-width=".8"/>
<rect x="1094.6" y="846.5" width="89.7" height="8.7" fill="#5278f4" stroke="#555a66" stroke-width=".8"/>
<rect x="1184.3" y="847.5" width="90.2" height="7.7" fill="#5278f4" stroke="#555a66" stroke-width=".8"/>
<rect x="1274.5" y="849.2" width="89.0" height="6.0" fill="#5278f4" stroke="#555a66" stroke-width=".8"/>
<rect x="1363.5" y="850.5" width="89.5" height="4.7" fill="#5278f4" stroke="#555a66" stroke-width=".8"/>
<rect x="1453.0" y="851.5" width="90.5" height="3.7" fill="#5278f4" stroke="#555a66" stroke-width=".8"/>
<rect x="1543.5" y="852.5" width="89.0" height="2.7" fill="#5278f4" stroke="#555a66" stroke-width=".8"/>
<rect x="1632.5" y="853.2" width="90.0" height="2.0" fill="#5278f4" stroke="#555a66" stroke-width=".8"/>
<rect x="1722.5" y="854.6" width="128.5" height="0.8" fill="#5278f4" stroke="#555a66" stroke-width=".8"/>
<text x="1049.2" y="865.8" text-anchor="middle" fill="#5c6cf0">15.68</text>
<text x="1138.9" y="865.8" text-anchor="middle" fill="#5c6cf0">13.99</text>
<text x="1228.7" y="865.8" text-anchor="middle" fill="#5c6cf0">12.07</text>
<text x="1318.4" y="865.8" text-anchor="middle" fill="#5c6cf0">10.03</text>
<text x="1408.1" y="865.8" text-anchor="middle" fill="#5c6cf0">8.00</text>
<text x="1497.8" y="865.8" text-anchor="middle" fill="#5c6cf0">6.10</text>
<text x="1587.5" y="865.8" text-anchor="middle" fill="#5c6cf0">4.41</text>
<text x="1677.3" y="865.8" text-anchor="middle" fill="#5c6cf0">2.97</text>
<text x="1767.0" y="865.8" text-anchor="middle" fill="#5c6cf0">1.81</text>
<rect x="1030.0" y="887.3" width="64.6" height="8.3" fill="#f4777a" stroke="#555a66" stroke-width=".8"/>
<rect x="1094.6" y="887.3" width="89.7" height="9.7" fill="#f4777a" stroke="#555a66" stroke-width=".8"/>
<rect x="1184.3" y="887.3" width="90.2" height="9.7" fill="#f4777a" stroke="#555a66" stroke-width=".8"/>
<rect x="1274.5" y="887.3" width="89.0" height="9.7" fill="#f4777a" stroke="#555a66" stroke-width=".8"/>
<rect x="1363.5" y="887.3" width="89.5" height="9.7" fill="#f4777a" stroke="#555a66" stroke-width=".8"/>
<rect x="1453.0" y="887.3" width="90.5" height="9.7" fill="#f4777a" stroke="#555a66" stroke-width=".8"/>
<rect x="1543.5" y="887.3" width="89.0" height="8.3" fill="#f4777a" stroke="#555a66" stroke-width=".8"/>
<rect x="1632.5" y="887.3" width="90.0" height="8.3" fill="#f4777a" stroke="#555a66" stroke-width=".8"/>
<rect x="1722.5" y="887.3" width="128.5" height="5.0" fill="#f4777a" stroke="#555a66" stroke-width=".8"/>
<text x="1049.2" y="887" text-anchor="middle" fill="#f05860">-0.03</text>
<text x="1138.9" y="887" text-anchor="middle" fill="#f05860">-0.04</text>
<text x="1228.7" y="887" text-anchor="middle" fill="#f05860">-0.04</text>
<text x="1318.4" y="887" text-anchor="middle" fill="#f05860">-0.04</text>
<text x="1408.1" y="887" text-anchor="middle" fill="#f05860">-0.04</text>
<text x="1497.8" y="887" text-anchor="middle" fill="#f05860">-0.04</text>
<text x="1587.5" y="887" text-anchor="middle" fill="#f05860">-0.03</text>
<text x="1677.3" y="887" text-anchor="middle" fill="#f05860">-0.03</text>
<text x="1767.0" y="887" text-anchor="middle" fill="#f05860">-0.02</text>
<rect x="1030.0" y="917.0" width="64.6" height="2.0" fill="#5278f4" stroke="#555a66" stroke-width=".8"/>
<rect x="1094.6" y="914.6" width="89.7" height="4.4" fill="#5278f4" stroke="#555a66" stroke-width=".8"/>
<rect x="1184.3" y="912.0" width="90.2" height="7.0" fill="#5278f4" stroke="#555a66" stroke-width=".8"/>
<rect x="1274.5" y="910.4" width="89.0" height="8.6" fill="#5278f4" stroke="#555a66" stroke-width=".8"/>
<rect x="1363.5" y="909.4" width="89.5" height="9.6" fill="#5278f4" stroke="#555a66" stroke-width=".8"/>
<rect x="1453.0" y="909.4" width="90.5" height="9.6" fill="#5278f4" stroke="#555a66" stroke-width=".8"/>
<rect x="1543.5" y="909.4" width="89.0" height="9.6" fill="#5278f4" stroke="#555a66" stroke-width=".8"/>
<rect x="1632.5" y="910.4" width="90.0" height="8.6" fill="#5278f4" stroke="#555a66" stroke-width=".8"/>
<rect x="1722.5" y="911.4" width="128.5" height="7.6" fill="#5278f4" stroke="#555a66" stroke-width=".8"/>
<text x="1049.2" y="930" text-anchor="middle" fill="#5c6cf0">31.12</text>
<text x="1138.9" y="930" text-anchor="middle" fill="#5c6cf0">70.39</text>
<text x="1228.7" y="930" text-anchor="middle" fill="#5c6cf0">101.97</text>
<text x="1318.4" y="930" text-anchor="middle" fill="#5c6cf0">124.31</text>
<text x="1408.1" y="930" text-anchor="middle" fill="#5c6cf0">136.89</text>
<text x="1497.8" y="930" text-anchor="middle" fill="#5c6cf0">140.23</text>
<text x="1587.5" y="930" text-anchor="middle" fill="#5c6cf0">135.64</text>
<text x="1677.3" y="930" text-anchor="middle" fill="#5c6cf0">124.95</text>
<text x="1767.0" y="930" text-anchor="middle" fill="#5c6cf0">110.21</text>
<rect x="1030.0" y="951.2" width="64.6" height="5.0" fill="#f4777a" stroke="#555a66" stroke-width=".8"/>
<rect x="1094.6" y="951.2" width="89.7" height="7.0" fill="#f4777a" stroke="#555a66" stroke-width=".8"/>
<rect x="1184.3" y="951.2" width="90.2" height="8.8" fill="#f4777a" stroke="#555a66" stroke-width=".8"/>
<rect x="1274.5" y="951.2" width="89.0" height="9.8" fill="#f4777a" stroke="#555a66" stroke-width=".8"/>
<rect x="1363.5" y="951.2" width="89.5" height="9.8" fill="#f4777a" stroke="#555a66" stroke-width=".8"/>
<rect x="1453.0" y="951.2" width="90.5" height="9.8" fill="#f4777a" stroke="#555a66" stroke-width=".8"/>
<rect x="1543.5" y="951.2" width="89.0" height="8.8" fill="#f4777a" stroke="#555a66" stroke-width=".8"/>
<rect x="1632.5" y="951.2" width="90.0" height="7.8" fill="#f4777a" stroke="#555a66" stroke-width=".8"/>
<rect x="1722.5" y="951.2" width="128.5" height="6.8" fill="#f4777a" stroke="#555a66" stroke-width=".8"/>
<text x="1049.2" y="951" text-anchor="middle" fill="#f05860">-86.68</text>
<text x="1138.9" y="951" text-anchor="middle" fill="#f05860">-119.99</text>
<text x="1228.7" y="951" text-anchor="middle" fill="#f05860">-144.22</text>
<text x="1318.4" y="951" text-anchor="middle" fill="#f05860">-158.30</text>
<text x="1408.1" y="951" text-anchor="middle" fill="#f05860">-162.28</text>
<text x="1497.8" y="951" text-anchor="middle" fill="#f05860">-157.21</text>
<text x="1587.5" y="951" text-anchor="middle" fill="#f05860">-144.88</text>
<text x="1677.3" y="951" text-anchor="middle" fill="#f05860">-127.48</text>
<text x="1767.0" y="951" text-anchor="middle" fill="#f05860">-107.30</text>
<text x="1004.5" y="818" text-anchor="middle" fill="#666">PnL</text><text x="1878" y="818" text-anchor="middle" fill="#666">PnL</text>
<text x="1004.5" y="860" text-anchor="middle" fill="#666">Delta</text><text x="1878" y="860" text-anchor="middle" fill="#666">Delta</text>
<text x="1004.5" y="892" text-anchor="middle" fill="#666">Gamma</text><text x="1878" y="892" text-anchor="middle" fill="#666">Gamma</text>
<text x="1004.5" y="924" text-anchor="middle" fill="#666">Theta</text><text x="1878" y="924" text-anchor="middle" fill="#666">Theta</text>
<text x="1004.5" y="956" text-anchor="middle" fill="#666">Vega</text><text x="1878" y="956" text-anchor="middle" fill="#666">Vega</text>
<rect x="1415.5" y="769.5" width="49" height="199.5" rx="4" fill="#e9eff8" fill-opacity=".88" stroke="#3f4b66" stroke-width="1"/>
<text x="1440" y="781" text-anchor="middle" fill="#222">6418.37</text>
<text x="1440" y="815" text-anchor="middle" fill="#f01010">-1,541</text>
<text x="1440" y="830" text-anchor="middle" fill="#f01010">-6.6%</text>
<text x="1440" y="861" text-anchor="middle" fill="#2020f0">7.29</text>
<text x="1440" y="893" text-anchor="middle" fill="#f01010">-0.04</text>
<text x="1440" y="925" text-anchor="middle" fill="#2020f0">139.13</text>
<text x="1440" y="957" text-anchor="middle" fill="#f01010">-161.38</text>
</svg>
</body></html>
